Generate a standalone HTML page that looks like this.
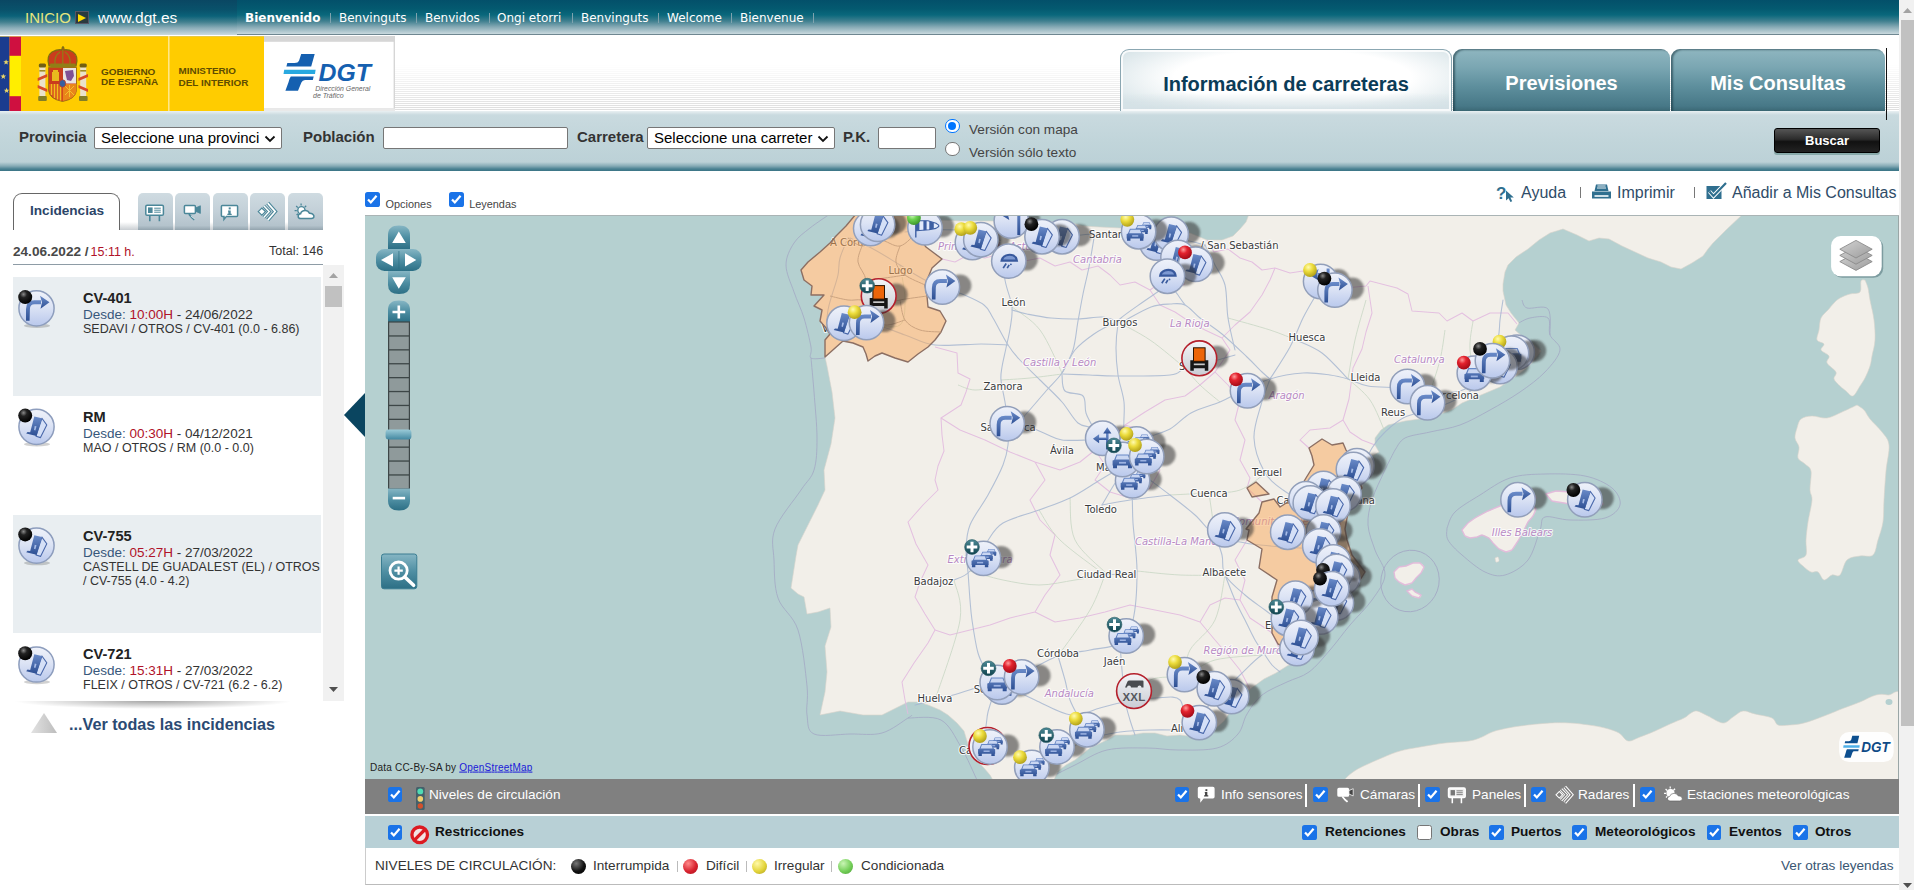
<!DOCTYPE html>
<html lang="es"><head><meta charset="utf-8"><title>DGT - Información de carreteras</title>
<style>
html,body{margin:0;padding:0}
body{width:1914px;height:890px;overflow:hidden;background:#fff;position:relative;font-family:"Liberation Sans",sans-serif;color:#333;font-size:13.6px}
.abs,#page *{box-sizing:border-box}
#page div,#page span,#page a,#page svg,#page i,#page b{position:absolute}
#page span.t{white-space:nowrap;line-height:1}
/* top bar */
#top{left:0;top:0;width:1899px;height:35px;background:linear-gradient(#03506a 0,#045a70 9px,#0a687c 15px,#3f7f8f 21px,#86aab5 27px,#c9d9de 34px)}
#topl{left:0;top:0;width:237px;height:35px;background:linear-gradient(#0a4763 0,#09526b 10px,#0b6279 16px,#41808f 22px,#8caeb9 28px,#cbdade 35px)}
#topline{left:237px;top:34px;width:1662px;height:1px;background:#6f8791}
.lang{top:12px;font-family:"DejaVu Sans",sans-serif;font-size:12px;color:#fff}
.sep{top:13px;width:1px;height:10px;background:#7fa3ae}
/* logo */
#logo{left:0;top:36px;width:394px;height:75px;background:#fc0}
/* stripes */
#stripes{left:394px;top:36px;width:1505px;height:75px;background:linear-gradient(#fff 0,#fff 38%,rgba(255,255,255,.55) 65%,rgba(255,255,255,0) 100%),repeating-linear-gradient(#fff 0,#fff 1px,#dedede 1px,#dedede 2px);}
#stripes2{display:none}
/* tabs */
.tab{top:48.5px;height:62.5px;border-radius:9px 9px 0 0;font-weight:bold;font-size:20px;text-align:center;line-height:68px}
.tab.on{left:1120px;width:332px;border:1px solid #8ba7b2;border-bottom:0;color:#0b3c58;background:linear-gradient(rgba(255,255,255,0) 70%,#d3e0e5 100%),radial-gradient(ellipse 60% 75% at 52% 45%,#fff 60%,#d9e5e9 100%);box-shadow:inset 0 0 0 2px rgba(255,255,255,.8)}
.tab.off{color:#fff;background:linear-gradient(#8fb6c0 0,#7aa6b2 30%,#5e8f9d 60%,#477887 92%,#3b6875 100%);box-shadow:inset 2px 1px 2px rgba(20,50,60,.55)}
/* search bar */
#sbar{left:0;top:111px;width:1899px;height:60px;background:linear-gradient(#e9f0f2 0,#c9dadf 4px,#c1d5da 30px,#bcd1d7 51px,#86abb6 55px,#4a8192 58px,#3b7485 60px)}
.lbl{font-weight:bold;font-size:15px;color:#333}
.inp{background:#fff;border:1px solid #767676;border-radius:2px}

.sel svg{right:5px;top:7px}
.cb{width:14.6px;height:14.6px;border-radius:2.6px;background:#1a73e8}
.cb.off{background:#fff;border:1.2px solid #767676}
.radio{width:14.4px;height:14.4px;border-radius:50%;background:#fff;border:1px solid #767676}
.radio.on{border:1px solid #0075ff}
.radio.on:after{content:"";position:absolute;left:2.2px;top:2.2px;width:8px;height:8px;border-radius:50%;background:#0075ff}
.tb{font-size:16px;color:#2f4c68;top:184.8px}
.vsep{width:1px;background:#777}
/* left panel */
#inc{left:13px;top:193px;width:107px;height:37px;border:1px solid #666;border-bottom:0;border-radius:9px 9px 0 0;background:#fff}
.itab{top:193px;width:35px;height:37px;border-radius:5px 5px 0 0;background:linear-gradient(#cfdbe1 0,#c3d0d8 50%,#b4c3cc 88%,#93a4ae 100%)}
.row{left:13px;width:308px;height:119px}
.row.alt{background:#e9eef1}
.row b{left:70px;top:14px;font-size:14.6px;color:#222;white-space:nowrap;line-height:1}
.row .d{left:70px;top:30.8px;font-size:13.5px;color:#333;white-space:nowrap;line-height:1}
.row .d em{font-style:normal;color:#37577b}.row .d u{text-decoration:none;color:#b01229}
.row .p{left:70px;top:45px;width:240px;font-size:12.5px;color:#333;line-height:14.4px}
/* bars */
#gbar{left:365px;top:779px;width:1534px;height:34.5px;background:#808080}
#bbar{left:365px;top:815.5px;width:1534px;height:32.5px;background:#b8d0d6}
#leg{left:365px;top:848px;width:1534px;height:37px;background:#fff;border-left:1px solid #ccc;border-bottom:1px solid #bbb}
.gt{font-size:13.6px;color:#fff;top:787.7px}
.bt{font-size:13.6px;font-weight:bold;color:#111;top:825px}
.lt{font-size:13.6px;color:#333;top:859px}
.ball{width:15px;height:15px;border-radius:50%;top:859px}
.wsep{width:2px;height:23px;top:784px;background:#fff}
</style></head>
<body><div id="page">
<div id="top"></div><div id="topl"></div><div id="topline"></div>
<span class="t" style="left:25px;top:10px;font-size:15px;color:#e6e57e">INICIO</span>
<i style="left:75px;top:11px;width:14px;height:13px;background:#2a3a3f;border:1px solid #556"></i>
<svg style="left:78px;top:14px" width="8" height="8"><path d="M0 0L8 4L0 8Z" fill="#fd0"/></svg>
<span class="t" style="left:98px;top:10px;font-size:15.5px;color:#fff">www.dgt.es</span>
<span class="t lang" style="left:245px;font-weight:bold">Bienvenido</span><i class="sep" style="left:330px"></i>
<span class="t lang" style="left:339px">Benvinguts</span><i class="sep" style="left:416px"></i>
<span class="t lang" style="left:425px">Benvidos</span><i class="sep" style="left:489px"></i>
<span class="t lang" style="left:497px">Ongi etorri</span><i class="sep" style="left:572px"></i>
<span class="t lang" style="left:581px">Benvinguts</span><i class="sep" style="left:658px"></i>
<span class="t lang" style="left:667px">Welcome</span><i class="sep" style="left:731px"></i>
<span class="t lang" style="left:740px">Bienvenue</span><i class="sep" style="left:813px"></i>

<div id="stripes"></div><div id="stripes2"></div>
<!--LOGO--><svg style="left:0;top:36px" width="400" height="76" viewBox="0 36 400 76">
<rect x="0" y="36" width="264" height="75.5" fill="#ffcc00"/>
<rect x="0" y="36" width="9.6" height="75.5" fill="#1b3c8f"/>
<path transform="translate(6.1 62.2)" d="M0 -2.8L0.8 -0.9L2.8 -0.9L1.2 0.4L1.8 2.4L0 1.2L-1.8 2.4L-1.2 0.4L-2.8 -0.9L-0.8 -0.9Z" fill="#e8d46a"/>
<path transform="translate(3.3 76.5)" d="M0 -2.8L0.8 -0.9L2.8 -0.9L1.2 0.4L1.8 2.4L0 1.2L-1.8 2.4L-1.2 0.4L-2.8 -0.9L-0.8 -0.9Z" fill="#e8d46a"/>
<path transform="translate(6.6 90.6)" d="M0 -2.8L0.8 -0.9L2.8 -0.9L1.2 0.4L1.8 2.4L0 1.2L-1.8 2.4L-1.2 0.4L-2.8 -0.9L-0.8 -0.9Z" fill="#e8d46a"/>
<rect x="9.6" y="36" width="11.4" height="75.5" fill="#cf1040"/><rect x="9.6" y="55.8" width="11.4" height="40.4" fill="#ffee00"/>
<rect x="0" y="36" width="264" height="1" fill="#e0c860" opacity=".7"/>
<g opacity=".95"><rect x="39.400000000000006" y="66" width="6" height="30" fill="#e9e4d6"/><rect x="38.2" y="96" width="8.6" height="5" rx="1" fill="#7d7a2a"/><rect x="38.800000000000004" y="63.5" width="7.2" height="4" rx="1.5" fill="#6b5a14"/><path d="M37.7 78L47.2 74L47.2 77L37.7 81Z M37.7 88L47.2 92L47.2 89L37.7 85Z" fill="#d4442c"/><rect x="39.400000000000006" y="70" width="6" height="1.6" fill="#9b8a2a"/><rect x="80.2" y="66" width="6" height="30" fill="#e9e4d6"/><rect x="79" y="96" width="8.6" height="5" rx="1" fill="#7d7a2a"/><rect x="79.6" y="63.5" width="7.2" height="4" rx="1.5" fill="#6b5a14"/><path d="M78.5 78L88 74L88 77L78.5 81Z M78.5 88L88 92L88 89L78.5 85Z" fill="#d4442c"/><rect x="80.2" y="70" width="6" height="1.6" fill="#9b8a2a"/><path d="M49 66Q46 56 52 52Q58 49 62 50Q62 47.5 62.6 47L63.4 47Q64 47.5 64 50Q68 49 73 52Q79 56 76 66Q63 63 49 66Z" fill="#c8351f" stroke="#7a6a12" stroke-width="1.3"/><path d="M55 64Q54 56 60 52 M70 64Q71 56 65 52 M62.8 50L62.8 64" stroke="#8c7a18" stroke-width="1.2" fill="none"/><rect x="50" y="63.6" width="25.5" height="3.4" rx="1" fill="#8c7a18"/><path d="M48.5 67.5L76.5 67.5L76.5 90Q76 99 62.5 101.5Q49 99 48.5 90Z" fill="#c8351f" stroke="#8c6a18" stroke-width=".8"/><rect x="63" y="68" width="13" height="15.5" fill="#e9e6ee"/><path d="M65 71L73 70L74 76L71 81L67 80L66 76Z" fill="#7a4a9c"/><path d="M49 84L62.5 84L62.5 101Q50 98.5 49 90Z" fill="#d9541f"/><path d="M51.5 84L51.5 95M54.5 84L54.5 98M57.5 84L57.5 99.5M60.5 84L60.5 100.5" stroke="#f0c020" stroke-width="1.3"/><path d="M63 84L76.5 84L76.5 90Q76 98.5 63 101Z" fill="#e8821c"/><path d="M65 86L74 95M74 86L65 95M69.5 85L69.5 97" stroke="#f2c030" stroke-width="1"/><path d="M53 70L58 70L58 72L59 72L59 81L52 81L52 72L53 72Z" fill="#e8b820"/><ellipse cx="62.5" cy="83.5" rx="3.2" ry="3.8" fill="#2d5aa8" stroke="#c8351f" stroke-width=".8"/></g>
<text x="101" y="74.7" font-size="9.3" textLength="54.4" font-family="Liberation Sans,sans-serif" font-weight="bold" fill="#5f4d00" lengthAdjust="spacingAndGlyphs">GOBIERNO</text>
<text x="101" y="85.2" font-size="9.3" textLength="57.2" font-family="Liberation Sans,sans-serif" font-weight="bold" fill="#5f4d00" lengthAdjust="spacingAndGlyphs">DE ESPAÑA</text>
<rect x="168.3" y="36" width="1.1" height="75.5" fill="#fff3c0"/>
<text x="178.6" y="74.3" font-size="9.3" textLength="57.4" font-family="Liberation Sans,sans-serif" font-weight="bold" fill="#5f4d00" lengthAdjust="spacingAndGlyphs">MINISTERIO</text>
<text x="178.6" y="86.3" font-size="9.3" textLength="69.8" font-family="Liberation Sans,sans-serif" font-weight="bold" fill="#5f4d00" lengthAdjust="spacingAndGlyphs">DEL INTERIOR</text>
<rect x="264" y="36" width="131" height="75.5" fill="#d6d6d6"/><rect x="264" y="41.8" width="129.6" height="66.6" fill="#fff"/>
<rect x="264" y="108.4" width="131" height="3.1" fill="#e9e9e9"/>
<g transform="translate(283.5 54) scale(1 1)"><path d="M17.7 0L31.2 0L27.7 12.6L2.9 12.6L3.8 9.1L11 9.1Q14.6 9.1 15.6 6.6Z" fill="#1560b0"/><path d="M0.7 15.7L32.1 15.7L31.5 20.1L0 20.1Z" fill="#29a9e0"/><path d="M7.3 22.6L30.2 22.6L29.3 26.1L21.5 26.1Q18.9 26.1 17.9 28.6L14.5 36.8L1.9 36.8L5.1 28Q6 24.4 7.3 22.6Z" fill="#1560b0"/></g>
<text x="318.6" y="80.7" font-family="Liberation Sans,sans-serif" font-weight="bold" font-style="italic" font-size="24.5" fill="#1560b0" textLength="52.4" lengthAdjust="spacingAndGlyphs">DGT</text>
<text x="315.3" y="90.8" font-family="Liberation Sans,sans-serif" font-style="italic" font-size="7.6" fill="#666" textLength="55" lengthAdjust="spacingAndGlyphs">Dirección General</text>
<text x="313" y="97.9" font-family="Liberation Sans,sans-serif" font-style="italic" font-size="7.6" fill="#666" textLength="30.6" lengthAdjust="spacingAndGlyphs">de Tráfico</text>
</svg><!--/LOGO-->

<div class="tab on">Información de carreteras</div>
<div class="tab off" style="left:1453px;width:217px">Previsiones</div>
<div class="tab off" style="left:1671px;width:214px">Mis Consultas</div>
<i style="left:1886px;top:48px;width:1px;height:72px;background:#111;z-index:5"></i>

<div id="sbar"></div>
<span class="t lbl" style="left:19px;top:129px">Provincia</span>
<div class="inp sel" style="left:94px;top:127px;width:188px;height:22px"><svg width="12" height="8" viewBox="0 0 12 8"><path d="M1.5 1.5L6 6L10.5 1.5" fill="none" stroke="#111" stroke-width="1.8"/></svg></div>
<span class="t" style="left:101px;top:130px;font-size:15px;color:#000">Seleccione una provinci</span>

<span class="t lbl" style="left:303px;top:129px">Población</span>
<div class="inp" style="left:383px;top:127px;width:185px;height:22px"></div>
<span class="t lbl" style="left:577px;top:129px">Carretera</span>
<div class="inp sel" style="left:647px;top:127px;width:188px;height:22px"><svg width="12" height="8" viewBox="0 0 12 8"><path d="M1.5 1.5L6 6L10.5 1.5" fill="none" stroke="#111" stroke-width="1.8"/></svg></div>
<span class="t" style="left:654px;top:130px;font-size:15px;color:#000">Seleccione una carreter</span>
<span class="t lbl" style="left:843px;top:129px">P.K.</span>
<div class="inp" style="left:878px;top:127px;width:58px;height:22px"></div>
<i class="radio on" style="left:945.3px;top:118.8px"></i>
<i class="radio" style="left:945.3px;top:141.8px"></i>
<span class="t" style="left:969px;top:123px;font-size:13.6px;color:#444">Versión con mapa</span>
<span class="t" style="left:969px;top:146px;font-size:13.6px;color:#444">Versión sólo texto</span>
<div style="left:1774px;top:128px;width:106px;height:25px;border-radius:3px;background:linear-gradient(#555 0,#2b2b2b 45%,#111 55%,#222 100%);border:1px solid #000;box-shadow:0 2px 0 #8aa"></div>
<span class="t" style="left:1805px;top:134px;font-size:13px;font-weight:bold;color:#fff">Buscar</span>

<span class="t tb" style="left:1521px">Ayuda</span><i class="vsep" style="left:1580px;top:187px;height:11px"></i>
<span class="t tb" style="left:1617px">Imprimir</span><i class="vsep" style="left:1694px;top:187px;height:11px"></i>
<span class="t tb" style="left:1732px">Añadir a Mis Consultas</span>

<div id="tabshadow" style="left:120px;top:222px;width:203px;height:8px;background:linear-gradient(rgba(255,255,255,0),#c9ced2)"></div>
<div id="inc"></div>
<span class="t" style="left:30px;top:204px;font-size:13.6px;font-weight:bold;color:#2b4568">Incidencias</span>
<div class="itab" style="left:138px"></div><div class="itab" style="left:175px"></div><div class="itab" style="left:213px"></div><div class="itab" style="left:250px"></div><div class="itab" style="left:288px"></div>
<span class="t" style="left:13px;top:245px;font-size:13.6px;font-weight:bold;color:#484848">24.06.2022 /</span>
<span class="t" style="left:90.5px;top:245.5px;font-size:12.5px;color:#b01229">15:11 h.</span>
<span class="t" style="left:269px;top:245px;font-size:12.5px;color:#333">Total: 146</span>
<i style="left:13px;top:264px;width:310px;height:1px;background:#8e9ca6"></i>
<div style="left:323px;top:265px;width:21px;height:436px;background:#f1f1f1"></div>
<i style="left:325px;top:286px;width:17px;height:21px;background:#c1c1c1"></i>
<svg style="left:329px;top:273px" width="9" height="5"><path d="M0 5L4.5 0L9 5Z" fill="#a3a3a3"/></svg>
<svg style="left:329px;top:687px" width="9" height="5"><path d="M0 0L4.5 5L9 0Z" fill="#505050"/></svg>
<div class="row alt" style="top:277px"><b>CV-401</b><span class="d"><em>Desde:</em> <u>10:00H</u> - 24/06/2022</span><span class="p">SEDAVI / OTROS / CV-401 (0.0 - 6.86)</span></div>
<div class="row" style="top:396px"><b>RM</b><span class="d"><em>Desde:</em> <u>00:30H</u> - 04/12/2021</span><span class="p">MAO / OTROS / RM (0.0 - 0.0)</span></div>
<div class="row alt" style="top:515px;height:118px"><b>CV-755</b><span class="d"><em>Desde:</em> <u>05:27H</u> - 27/03/2022</span><span class="p">CASTELL DE GUADALEST (EL) / OTROS / CV-755 (4.0 - 4.2)</span></div>
<div class="row" style="top:633px;height:68px;overflow:hidden"><b>CV-721</b><span class="d"><em>Desde:</em> <u>15:31H</u> - 27/03/2022</span><span class="p">FLEIX / OTROS / CV-721 (6.2 - 6.2)</span></div>
<div style="left:13px;top:701px;width:280px;height:8px;background:radial-gradient(ellipse at 50% 0,rgba(0,0,0,.35),rgba(0,0,0,0) 70%)"></div>
<svg style="left:31px;top:713px" width="27" height="21"><defs><linearGradient id="tg" x1="0" x2="1"><stop offset="0" stop-color="#e2e2e2"/><stop offset="1" stop-color="#bdbdbd"/></linearGradient></defs><path d="M13 0L26 20L0 20Z" fill="url(#tg)"/></svg>
<span class="t" style="left:69px;top:716px;font-size:16.2px;font-weight:bold;color:#2b4a73">...Ver todas las incidencias</span>
<svg style="left:344px;top:393px" width="21" height="44"><path d="M21 0L0 22L21 44Z" fill="#0a4560"/></svg>

<i class="cb" style="left:365.2px;top:192.1px"><svg width="14.6" height="14.6" viewBox="0 0 13 13"><path d="M2.7 6.6L5.2 9.3L10.3 3.4" fill="none" stroke="#fff" stroke-width="2"/></svg></i><span class="t" style="left:385.6px;top:198.6px;font-size:10.9px;color:#444">Opciones</span>
<i class="cb" style="left:449.1px;top:192.1px"><svg width="14.6" height="14.6" viewBox="0 0 13 13"><path d="M2.7 6.6L5.2 9.3L10.3 3.4" fill="none" stroke="#fff" stroke-width="2"/></svg></i><span class="t" style="left:469.2px;top:198.6px;font-size:10.9px;color:#444">Leyendas</span>

<div id="map" style="left:365px;top:216px;width:1534px;height:563px;background:#b5d0d0;overflow:hidden"><!--MAP--><svg style="left:0;top:0" width="1534" height="563" viewBox="365 216 1534 563">
<defs>
<linearGradient id="mg" x1="0" y1="0" x2="0" y2="1"><stop offset="0" stop-color="#eff2fa"/><stop offset=".45" stop-color="#dde4f5"/><stop offset="1" stop-color="#b9c8ec"/></linearGradient>
<linearGradient id="ig" x1="0" y1="0" x2="0" y2="1"><stop offset="0" stop-color="#6a8bc9"/><stop offset="1" stop-color="#2d4f93"/></linearGradient>
<linearGradient id="xg" x1="0" y1="0" x2="0" y2="1"><stop offset="0" stop-color="#f4f5f7"/><stop offset="1" stop-color="#c9ccd4"/></linearGradient>
<radialGradient id="bk" cx=".38" cy=".3" r=".7"><stop offset="0" stop-color="#8a8a8a"/><stop offset=".35" stop-color="#222"/><stop offset="1" stop-color="#000"/></radialGradient>
<radialGradient id="br" cx=".38" cy=".3" r=".7"><stop offset="0" stop-color="#ff9c9c"/><stop offset=".4" stop-color="#e3222e"/><stop offset="1" stop-color="#a30c18"/></radialGradient>
<radialGradient id="by" cx=".38" cy=".3" r=".7"><stop offset="0" stop-color="#fffbb0"/><stop offset=".45" stop-color="#ecdc3c"/><stop offset="1" stop-color="#b3a21a"/></radialGradient>
<radialGradient id="bg" cx=".38" cy=".3" r=".7"><stop offset="0" stop-color="#d4f9c2"/><stop offset=".45" stop-color="#6fd453"/><stop offset="1" stop-color="#3f9a2c"/></radialGradient>
<linearGradient id="pg" x1="0" y1="0" x2="0" y2="1"><stop offset="0" stop-color="#4d8a96"/><stop offset="1" stop-color="#0e424e"/></linearGradient>
<filter id="bl" x="-40%" y="-40%" width="180%" height="180%"><feGaussianBlur stdDeviation="1.3"/></filter>
<g id="mk"><ellipse cx="17.5" cy="-1.5" rx="11.5" ry="11" fill="#333" opacity=".55" filter="url(#bl)"/><circle r="17.2" fill="url(#mg)" stroke="#929fba" stroke-width="1.5"/></g>
<g id="rk"><ellipse cx="17.5" cy="-1.5" rx="11.5" ry="11" fill="#333" opacity=".55" filter="url(#bl)"/><circle r="17.4" fill="url(#xg)" stroke="#b5202c" stroke-width="1.6"/></g>
<g id="turnR" fill="url(#ig)"><path d="M-10.5 12.5L-10.5 1Q-10.5 -8 -2 -8L4.5 -8L4.5 -4L-2 -4Q-6.6 -4 -6.6 1L-6.9 12.5Z"/><path d="M3.5 -12.5L13 -6L4 0.5L5.5 -6Z"/></g>
<g id="turnL" fill="url(#ig)"><path d="M6 14L6 -13L9 -13L9 14Z"/><path d="M7 -5L-3 -5L-3 -8.5L7 -8.5Z"/><path d="M-2 -12.5L-11.5 -6.8L-2 -1L-3.5 -6.8Z"/></g>
<g id="works"><path d="M5.4 -8.5L10.3 -1.8L4 10.8L-0.5 9.4Z" fill="#d5e0f7" stroke="#4867aa" stroke-width="1.1" stroke-linejoin="round"/><path d="M-2.2 -10.3L5.4 -8.5L0 9.2L-10.3 6.7L-9 5.1L-6.3 5.4Z" fill="url(#ig)"/><path d="M-1.8 -0.9L0 -0.45L-1.1 3.6L-2.5 3.1Z" fill="#a8bde8"/></g>
<g id="car1"><path d="M-5.6 -6L5.6 -6L7.6 -1L9 -0.4L9 4.2L8.6 4.2L8.6 6.6L5 6.6L5 4.2L-5 4.2L-5 6.6L-8.6 6.6L-8.6 4.2L-9 4.2L-9 -0.4L-7.6 -1Z" fill="url(#ig)"/><path d="M-4.9 -5L4.9 -5L6.4 -1.3L-6.4 -1.3Z" fill="#c9d6f2"/><rect x="-3.2" y="0.8" width="6.4" height="1.6" fill="#9db3e2"/></g>
<g id="cars"><g transform="translate(7.9 -6.2) scale(.55)"><use href="#car1"/></g><g transform="translate(2.9 -2.4) scale(.72)"><use href="#car1"/></g><g transform="translate(-3.4 2.7) scale(.95)"><use href="#car1"/></g></g>
<g id="car"><g transform="translate(0 1.5) scale(1.1)"><use href="#car1"/></g></g>
<g id="snow"><path d="M-8.5 0.6Q-8.3 -4.6 -3 -6.7Q1 -8.1 5 -6.7Q9.2 -4.6 9.4 0.6Z" fill="#38599d"/><path d="M-5.6 -1.6Q-4.8 -3.9 -2.2 -4.8Q1 -5.7 3.9 -4.8Q6.2 -3.9 6.7 -1.6Z" fill="#7d99d2"/><path d="M-5.6 7L-2.6 2.4M-1.6 7L0.4 3.8" stroke="#3a5c9f" stroke-width="1.7" fill="none"/><circle cx="2.1" cy="3.2" r=".9" fill="#3a5c9f"/></g>
<g id="wind"><path d="M-8.5 -7L3 -7L11 -4.5L13.7 -2.7L13.7 -1.3L11 0.6L4 2L-8.5 2.9Z" fill="#e3ebfb" stroke="#3d5fa3" stroke-width="1.1" stroke-linejoin="round"/><path d="M-8.5 -7L-5.6 -7L-5.6 2.7L-8.5 2.9Z M-1.6 -7L1.6 -7L1.6 2.3L-1.6 2.5Z M4.3 -6.6L8.8 -5.2L8.8 1L4.3 2Z" fill="#3d5fa3"/><path d="M-9.9 -4.3L-8.5 -7L-8.5 9.7L-9.9 9.7Z" fill="#3d5fa3"/></g>
<g id="cross" fill="url(#ig)" transform="translate(0.5 0.5) scale(.82)"><path d="M3.5 13L3.5 -8L6.5 -8L6.5 13Z"/><path d="M5 -14L10 -6.5L0 -6.5Z"/><path d="M5 -1.5L-6 -1.5L-6 1.5L5 1.5Z"/><path d="M-12.5 0L-5 -5.5L-5 5.5Z"/></g>
<g id="truck"><path d="M-9 2L9 2L9 12.5L5.5 12.5L5.5 10L-5.5 10L-5.5 12.5L-9 12.5Z" fill="#161616"/><rect x="-5.8" y="-10.5" width="11.6" height="13.5" fill="#ec650a" stroke="#2a1200" stroke-width="1"/><rect x="-5.5" y="5.2" width="11" height="1.7" fill="#c8c8c8"/></g>
<g id="xxl"><path d="M-9 -3.5L-6.5 -9.5Q-6 -10.5 -4.5 -10.5L8.5 -10.5Q9.5 -10.5 9.5 -9.5L9.5 -3.5L7.5 -3.5A2 2 0 0 0 3.5 -3.5L-3 -3.5A2 2 0 0 0 -7 -3.5Z" fill="#4a4c50"/></g>
<g id="plus"><circle r="7.4" fill="url(#pg)" stroke="#2a5a62" stroke-width=".6"/><path d="M-1.5 -5.3h3v3.8h3.8v3h-3.8v3.8h-3v-3.8h-3.8v-3h3.8z" fill="#fff"/></g>
</defs>
<rect x="365" y="216" width="1534" height="563" fill="#b5d0d0"/>
<g fill="none" stroke="#9d9bc0" stroke-width=".8" opacity=".75">
<path d="M830 214C826.7 216.3 816.0 223.2 810 228C804.0 232.8 798.0 236.8 794 243C790.0 249.2 786.0 256.8 786 265C786.0 273.2 791.0 283.2 794 292C797.0 300.8 801.2 308.8 804 318C806.8 327.2 809.8 340.3 811 347C812.2 353.7 808.7 356.2 811 358C813.3 359.8 822.7 358.0 825 358"/>
<path d="M811 358C811.5 363.7 813.0 378.7 814 392C815.0 405.3 817.0 425.0 817 438C817.0 451.0 816.7 461.3 814 470C811.3 478.7 807.5 480.2 801 490C794.5 499.8 779.5 517.3 775 529C770.5 540.7 773.5 548.5 774 560C774.5 571.5 774.0 586.3 778 598C782.0 609.7 793.2 615.3 798 630C802.8 644.7 805.5 671.8 807 686C808.5 700.2 805.8 707.0 807 715C808.2 723.0 806.8 730.8 814 734C821.2 737.2 838.7 734.2 850 734C861.3 733.8 872.3 735.7 882 733C891.7 730.3 903.0 721.0 908 718C913.0 715.0 911.3 715.5 912 715"/>
<path d="M908 718C913.5 718.3 932.2 715.2 941 720C949.8 724.8 955.0 737.0 961 747C967.0 757.0 974.3 774.5 977 780"/>
<path d="M1045 780C1050.0 777.5 1064.7 770.0 1075 765C1085.3 760.0 1095.0 752.8 1107 750C1119.0 747.2 1135.2 748.0 1147 748C1158.8 748.0 1166.3 750.0 1178 750C1189.7 750.0 1207.0 750.7 1217 748C1227.0 745.3 1233.0 739.7 1238 734C1243.0 728.3 1243.0 720.5 1247 714C1251.0 707.5 1255.3 700.3 1262 695C1268.7 689.7 1279.2 685.8 1287 682C1294.8 678.2 1301.8 677.3 1309 672C1316.2 666.7 1323.2 657.8 1330 650C1336.8 642.2 1343.0 633.3 1350 625C1357.0 616.7 1366.2 608.3 1372 600C1377.8 591.7 1384.5 583.3 1385 575C1385.5 566.7 1377.8 558.3 1375 550C1372.2 541.7 1368.5 533.3 1368 525C1367.5 516.7 1369.2 509.2 1372 500C1374.8 490.8 1381.2 478.3 1385 470C1388.8 461.7 1393.3 453.3 1395 450"/>
<path d="M1395 450C1396.7 448.0 1399.2 441.0 1405 438C1410.8 435.0 1420.8 434.2 1430 432C1439.2 429.8 1450.0 428.7 1460 425C1470.0 421.3 1480.0 415.5 1490 410C1500.0 404.5 1510.8 398.3 1520 392C1529.2 385.7 1538.3 379.0 1545 372C1551.7 365.0 1559.2 356.2 1560 350C1560.8 343.8 1552.0 340.3 1550 335C1548.0 329.7 1551.3 320.8 1548 318C1544.7 315.2 1535.2 317.0 1530 318C1524.8 319.0 1519.2 323.0 1517 324"/>
<path d="M1522 300C1522.8 301.3 1522.7 306.5 1527 308C1531.3 309.5 1544.2 304.5 1548 309C1551.8 313.5 1549.7 330.7 1550 335"/>
<path d="M1447 528C1448.3 525.3 1449.5 517.5 1455 512C1460.5 506.5 1470.8 500.7 1480 495C1489.2 489.3 1499.2 481.5 1510 478C1520.8 474.5 1532.5 474.3 1545 474C1557.5 473.7 1573.8 473.7 1585 476C1596.2 478.3 1606.2 483.2 1612 488C1617.8 492.8 1621.2 500.0 1620 505C1618.8 510.0 1613.3 515.5 1605 518C1596.7 520.5 1580.0 520.2 1570 520C1560.0 519.8 1550.0 515.3 1545 517C1540.0 518.7 1542.8 522.8 1540 530C1537.2 537.2 1533.8 552.5 1528 560C1522.2 567.5 1512.2 573.0 1505 575C1497.8 577.0 1492.2 575.3 1485 572C1477.8 568.7 1468.2 560.3 1462 555C1455.8 549.7 1450.5 544.5 1448 540C1445.5 535.5 1447.2 530.0 1447 528"/>
<ellipse cx="1410" cy="581" rx="29" ry="31" transform="rotate(20 1410 581)"/>
</g>
<g fill="#f2efe9" stroke="#d9d4cb" stroke-width=".6">
<polygon points="856,214 846,226 836,236 830,243 820,252 808,262 801,270 804,280 812,286 811,295 824,295 814,306 822,310 820,321 826,328 830,334 825,340 825,357 827,366 832,392 835,418 831,444 824,470 825,490 818,505 811,519 798,545 796,556 791,588 798,594 804,597 807,614 818,612 830,608 831,627 825,646 827,672 825,692 820,715 830,713 840,711 863,715 882,715 896,708 908,702 918,702 928,705 940,710 948,715 957,723 964,731 967,741 970,751 976,760 984,768 990,775 994,782 1053,782 1058,771 1066,765 1075,760 1090,748 1107,740 1115,735 1131,735 1143,733 1155,733 1167,736 1180,735 1195,737 1208,734 1216,728 1224,721 1230,712 1238,699 1250,689 1264,679 1276,673 1287,666 1300,660 1310,653 1313,643 1320,632 1336,613 1346,600 1355,588 1365,572 1358,563 1352,555 1347,540 1345,529 1347,518 1349,509 1355,496 1362,488 1368,464 1372,456 1379,452 1375,445 1375,438 1381,430 1388,425 1405,421 1427,418 1443,413 1453,409 1462,403 1481,395 1500,387 1519,374 1531,364 1541,351 1534,345 1524,338 1515,330 1519,323 1511,313 1506,305 1503,291 1503,284 1505,272 1508,265 1516,257 1528,249 1539,240 1550,233 1563,229 1577,235 1589,241 1599,238 1609,239 1622,246 1635,252 1648,258 1661,262 1671,267 1681,269 1692,263 1703,256 1708,249 1713,243 1726,230 1743,214 1249,214 1246,222 1240,229 1233,236 1222,240 1207,240 1190,233 1170,230 1140,229 1120,228 1100,227 1082,226 1072,223 1060,222 1030,221 1000,221 960,221 935,220 920,217 908,214"/>
<path d="M1343 782C1343.7 781.2 1344.8 779.0 1347 777C1349.2 775.0 1352.5 772.2 1356 770C1359.5 767.8 1363.3 766.2 1368 764C1372.7 761.8 1378.7 759.2 1384 757C1389.3 754.8 1394.0 752.7 1400 751C1406.0 749.3 1412.5 748.3 1420 747C1427.5 745.7 1436.8 744.0 1445 743C1453.2 742.0 1462.8 742.0 1469 741C1475.2 740.0 1477.7 738.7 1482 737C1486.3 735.3 1488.7 732.8 1495 731C1501.3 729.2 1510.8 727.3 1520 726C1529.2 724.7 1541.7 723.5 1550 723C1558.3 722.5 1563.5 722.7 1570 723C1576.5 723.3 1583.2 724.2 1589 725C1594.8 725.8 1600.0 726.7 1605 728C1610.0 729.3 1615.2 730.8 1619 733C1622.8 735.2 1624.5 740.3 1628 741C1631.5 741.7 1635.5 738.7 1640 737C1644.5 735.3 1650.0 733.2 1655 731C1660.0 728.8 1665.2 726.2 1670 724C1674.8 721.8 1680.5 719.8 1684 718C1687.5 716.2 1688.8 714.2 1691 713C1693.2 711.8 1694.2 710.5 1697 711C1699.8 711.5 1703.7 714.0 1708 716C1712.3 718.0 1718.8 722.8 1723 723C1727.2 723.2 1729.7 719.0 1733 717C1736.3 715.0 1739.3 711.5 1743 711C1746.7 710.5 1750.2 712.8 1755 714C1759.8 715.2 1768.2 716.2 1772 718C1775.8 719.8 1775.0 723.8 1778 725C1781.0 726.2 1785.7 725.3 1790 725C1794.3 724.7 1798.3 724.5 1804 723C1809.7 721.5 1817.3 718.5 1824 716C1830.7 713.5 1838.0 710.3 1844 708C1850.0 705.7 1854.7 704.2 1860 702C1865.3 699.8 1871.3 696.2 1876 695C1880.7 693.8 1883.7 694.3 1888 695C1892.3 695.7 1899.7 684.5 1902 699C1904.3 713.5 1995.2 768.2 1902 782C1808.8 795.8 1436.2 782.0 1343 782Z"/>
<path d="M1865 280C1865.5 281.3 1867.2 284.7 1868 288C1868.8 291.3 1869.0 294.7 1870 300C1871.0 305.3 1873.2 313.3 1874 320C1874.8 326.7 1875.3 334.0 1875 340C1874.7 346.0 1872.8 351.7 1872 356C1871.2 360.3 1871.2 362.3 1870 366C1868.8 369.7 1866.7 374.7 1865 378C1863.3 381.3 1862.0 383.0 1860 386C1858.0 389.0 1855.3 395.2 1853 396C1850.7 396.8 1848.2 392.7 1846 391C1843.8 389.3 1842.0 388.0 1840 386C1838.0 384.0 1834.7 381.3 1834 379C1833.3 376.7 1837.2 374.7 1836 372C1834.8 369.3 1828.2 365.7 1827 363C1825.8 360.3 1830.0 358.2 1829 356C1828.0 353.8 1821.8 352.0 1821 350C1820.2 348.0 1824.7 345.7 1824 344C1823.3 342.3 1817.8 342.3 1817 340C1816.2 337.7 1818.3 333.7 1819 330C1819.7 326.3 1819.5 321.3 1821 318C1822.5 314.7 1825.8 312.5 1828 310C1830.2 307.5 1832.0 305.0 1834 303C1836.0 301.0 1837.3 299.5 1840 298C1842.7 296.5 1846.7 295.0 1850 294C1853.3 293.0 1858.2 294.2 1860 292C1861.8 289.8 1860.2 283.0 1861 281C1861.8 279.0 1864.3 280.2 1865 280Z"/>
<path d="M1857 405C1854.5 406.2 1847.0 409.8 1842 412C1837.0 414.2 1832.0 417.3 1827 418C1822.0 418.7 1816.3 415.8 1812 416C1807.7 416.2 1803.5 417.0 1801 419C1798.5 421.0 1798.0 424.8 1797 428C1796.0 431.2 1794.7 434.8 1795 438C1795.3 441.2 1798.5 443.7 1799 447C1799.5 450.3 1797.0 455.2 1798 458C1799.0 460.8 1802.8 461.8 1805 464C1807.2 466.2 1810.2 466.7 1811 471C1811.8 475.3 1809.8 485.2 1810 490C1810.2 494.8 1812.3 494.7 1812 500C1811.7 505.3 1809.0 515.3 1808 522C1807.0 528.7 1806.3 534.5 1806 540C1805.7 545.5 1807.3 551.7 1806 555C1804.7 558.3 1798.5 558.2 1798 560C1797.5 561.8 1800.8 564.0 1803 566C1805.2 568.0 1808.5 571.0 1811 572C1813.5 573.0 1815.8 570.7 1818 572C1820.2 573.3 1821.7 579.5 1824 580C1826.3 580.5 1829.3 575.8 1832 575C1834.7 574.2 1837.5 577.5 1840 575C1842.5 572.5 1843.7 563.2 1847 560C1850.3 556.8 1855.7 556.8 1860 556C1864.3 555.2 1870.0 557.7 1873 555C1876.0 552.3 1876.3 545.5 1878 540C1879.7 534.5 1882.0 528.7 1883 522C1884.0 515.3 1883.5 508.5 1884 500C1884.5 491.5 1885.2 480.2 1886 471C1886.8 461.8 1889.7 451.5 1889 445C1888.3 438.5 1885.2 436.3 1882 432C1878.8 427.7 1873.0 422.7 1870 419C1867.0 415.3 1866.2 412.3 1864 410C1861.8 407.7 1858.2 405.8 1857 405Z"/>
<path d="M1462 530C1463.0 528.8 1465.8 525.0 1468 523C1470.2 521.0 1471.7 520.0 1475 518C1478.3 516.0 1483.8 513.0 1488 511C1492.2 509.0 1496.0 508.0 1500 506C1504.0 504.0 1508.7 501.0 1512 499C1515.3 497.0 1517.5 495.3 1520 494C1522.5 492.7 1524.8 491.2 1527 491C1529.2 490.8 1531.5 491.8 1533 493C1534.5 494.2 1536.3 496.2 1536 498C1535.7 499.8 1531.0 502.2 1531 504C1531.0 505.8 1535.7 507.0 1536 509C1536.3 511.0 1534.3 513.8 1533 516C1531.7 518.2 1529.7 519.3 1528 522C1526.3 524.7 1524.7 528.8 1523 532C1521.3 535.2 1519.8 538.0 1518 541C1516.2 544.0 1514.0 548.2 1512 550C1510.0 551.8 1508.2 552.2 1506 552C1503.8 551.8 1501.2 550.5 1499 549C1496.8 547.5 1494.7 544.8 1493 543C1491.3 541.2 1490.8 539.3 1489 538C1487.2 536.7 1484.0 535.2 1482 535C1480.0 534.8 1479.0 536.5 1477 537C1475.0 537.5 1472.0 538.2 1470 538C1468.0 537.8 1466.3 537.3 1465 536C1463.7 534.7 1462.5 531.0 1462 530Z"/>
<path d="M1546 494C1547.7 493.5 1552.0 491.3 1556 491C1560.0 490.7 1565.0 491.3 1570 492C1575.0 492.7 1581.3 493.8 1586 495C1590.7 496.2 1595.2 497.5 1598 499C1600.8 500.5 1603.3 502.7 1603 504C1602.7 505.3 1599.8 506.7 1596 507C1592.2 507.3 1585.3 506.7 1580 506C1574.7 505.3 1568.7 503.8 1564 503C1559.3 502.2 1555.0 502.5 1552 501C1549.0 499.5 1547.0 495.2 1546 494Z"/>
<path d="M1394 572C1394.8 571.2 1397.0 568.0 1399 567C1401.0 566.0 1403.7 566.7 1406 566C1408.3 565.3 1410.7 563.5 1413 563C1415.3 562.5 1418.2 562.3 1420 563C1421.8 563.7 1423.8 565.3 1424 567C1424.2 568.7 1422.3 571.2 1421 573C1419.7 574.8 1417.5 576.3 1416 578C1414.5 579.7 1413.8 581.8 1412 583C1410.2 584.2 1407.2 585.2 1405 585C1402.8 584.8 1400.7 583.2 1399 582C1397.3 580.8 1395.8 579.7 1395 578C1394.2 576.3 1394.2 573.0 1394 572Z"/>
<path d="M1407 591C1407.8 590.7 1410.7 588.8 1412 589C1413.3 589.2 1413.5 591.0 1415 592C1416.5 593.0 1420.3 594.0 1421 595C1421.7 596.0 1420.5 597.8 1419 598C1417.5 598.2 1414.0 597.2 1412 596C1410.0 594.8 1407.8 591.8 1407 591Z"/>
<path d="M1495 558C1495.5 557.8 1497.3 556.5 1498 557C1498.7 557.5 1499.3 560.2 1499 561C1498.7 561.8 1496.7 562.5 1496 562C1495.3 561.5 1495.2 558.7 1495 558Z"/>
</g>
<ellipse cx="1889" cy="702" rx="3.5" ry="3" fill="#b5d0d0"/>
<g fill="none" stroke="#e3b4dc" stroke-width="1.4" opacity=".8">
<polygon points="1462,530 1468,523 1475,518 1488,511 1500,506 1512,499 1520,494 1527,491 1533,493 1536,498 1531,504 1536,509 1533,516 1528,522 1523,532 1518,541 1512,550 1506,552 1499,549 1493,543 1489,538 1482,535 1477,537 1470,538 1465,536"/>
<polygon points="1546,494 1556,491 1570,492 1586,495 1598,499 1603,504 1596,507 1580,506 1564,503 1552,501"/>
<polygon points="1394,572 1399,567 1406,566 1413,563 1420,563 1424,567 1421,573 1416,578 1412,583 1405,585 1399,582 1395,578"/>
<polygon points="1407,591 1412,589 1415,592 1421,595 1419,598 1412,596"/>
</g>
<g fill="none" stroke="#e2b9df" stroke-width="1.05" stroke-linejoin="round" opacity=".85">
<polyline points="935,347 957,353 958,373 970,379 966,392 961,405 941,418 942,435 944,451 938,466 935,480 938,490 923,505 908,522 916,544 928,565 920,582 915,597 925,614 935,630 928,643 914,663 902,682 905,700 908,714"/>
<polyline points="1207,240 1214,252 1228,249 1240,258 1252,262 1262,270 1275,268 1290,273 1303,271 1318,280 1345,288 1366,286 1370,281 1397,288 1408,294 1412,311 1439,313 1447,321 1462,313 1473,321 1490,313 1508,313 1517,324"/>
<polyline points="1368,286 1372,313 1366,332 1362,349 1353,368 1351,384 1349,399 1343,420 1350,432 1362,440 1375,445"/>
<polyline points="942,259 955,262 968,255 985,258 1000,254 1020,262 1040,258 1055,266 1070,262 1082,270 1098,266 1110,275 1120,285 1135,282 1150,290 1160,283 1172,290 1185,284"/>
<polyline points="941,418 960,430 985,440 1010,452 1035,462 1060,470 1080,462 1095,450 1110,440 1125,425 1145,412 1165,400 1185,396 1200,385 1215,372"/>
<polyline points="1150,290 1160,305 1175,312 1190,322 1205,330 1222,338 1230,350 1222,362 1215,372 1228,385 1240,400 1235,420 1245,440 1240,460 1250,478 1247,488"/>
<polyline points="1222,338 1235,325 1250,312 1262,295 1270,280 1275,268"/>
<polyline points="1095,450 1105,465 1095,480 1110,492 1130,498 1150,488 1160,470 1150,455 1145,440 1135,428 1125,425"/>
<polyline points="1035,462 1045,480 1030,500 1040,520 1055,535 1050,555 1060,575 1045,595 1035,612 1010,618 990,625 970,630 950,635 935,630"/>
<polyline points="1035,612 1055,622 1080,618 1105,612 1130,605 1155,610 1180,615 1200,622 1215,640 1228,655 1240,670 1250,689"/>
<polyline points="1247,540 1235,560 1245,580 1240,600 1250,618 1265,628 1272,633"/>
<polyline points="1200,622 1210,605 1225,598 1240,600"/>
<polyline points="1272,633 1280,650 1290,660 1300,660"/>
<polyline points="1247,488 1262,502"/>
<polyline points="1309,448 1300,440 1310,430 1330,428 1343,420"/>
</g>
<g fill="none" stroke="#c3d4c0" stroke-width=".9" opacity=".8">
<path d="M900 265C900.8 270.8 905.0 290.0 905 300C905.0 310.0 905.0 320.8 900 325C895.0 329.2 879.2 325.0 875 325"/>
<path d="M1012 307C1016.7 310.8 1031.7 319.0 1040 330C1048.3 341.0 1058.3 365.8 1062 373"/>
<path d="M1001 380C1005.8 379.7 1019.8 379.0 1030 378C1040.2 377.0 1056.7 374.7 1062 374"/>
<path d="M1116 321C1121.7 324.2 1138.5 332.2 1150 340C1161.5 347.8 1179.2 363.3 1185 368"/>
<path d="M1185 368C1187.5 370.8 1194.2 379.3 1200 385C1205.8 390.7 1216.7 399.2 1220 402"/>
<path d="M1090 440 L1094 429"/>
<path d="M1003 386C998.3 386.7 982.5 390.2 975 390C967.5 389.8 960.8 385.8 958 385"/>
<path d="M1039 510C1042.5 515.0 1049.0 529.2 1060 540C1071.0 550.8 1097.5 569.2 1105 575"/>
<path d="M1105 575C1102.5 580.8 1097.8 596.5 1090 610C1082.2 623.5 1063.3 648.3 1058 656"/>
<path d="M1137 571C1144.2 571.7 1165.3 574.3 1180 575C1194.7 575.7 1217.5 575.0 1225 575"/>
<path d="M954 580C955.0 586.7 963.2 600.0 960 620C956.8 640.0 939.2 686.7 935 700"/>
<path d="M1124 702C1128.3 698.3 1139.8 684.5 1150 680C1160.2 675.5 1174.2 678.3 1185 675C1195.8 671.7 1202.2 663.3 1215 660C1227.8 656.7 1254.2 655.8 1262 655"/>
<path d="M1209 493 L1215 535"/>
<path d="M1209 493 L1170 495"/>
<path d="M1267 472C1262.5 475.0 1249.7 486.5 1240 490C1230.3 493.5 1214.2 492.5 1209 493"/>
<path d="M1296 340C1291.7 338.3 1281.3 333.7 1270 330C1258.7 326.3 1235.0 320.0 1228 318"/>
<path d="M1348 379C1351.7 382.5 1363.8 391.2 1370 400C1376.2 408.8 1382.5 426.7 1385 432"/>
<path d="M1348 379C1349.2 372.5 1352.0 353.2 1355 340C1358.0 326.8 1364.2 306.7 1366 300"/>
<path d="M1430 392C1431.7 386.7 1437.5 370.3 1440 360C1442.5 349.7 1444.2 335.0 1445 330"/>
<path d="M1478 385C1476.7 379.2 1470.8 360.7 1470 350C1469.2 339.3 1472.5 325.8 1473 321"/>
<path d="M1070 498C1070.8 505.0 1069.0 527.5 1075 540C1081.0 552.5 1100.8 567.5 1106 573"/>
<path d="M970 571C975.5 572.5 991.5 577.7 1003 580C1014.5 582.3 1027.0 585.0 1039 585C1051.0 585.0 1064.0 581.7 1075 580C1086.0 578.3 1100.0 575.8 1105 575"/>
<path d="M1225 575C1223.3 582.5 1220.8 607.5 1215 620C1209.2 632.5 1195.0 640.8 1190 650C1185.0 659.2 1185.8 670.8 1185 675"/>
</g>
<g fill="none" stroke="#a4b5d0" stroke-width="1.1" stroke-linecap="round" opacity=".8">
<path d="M850 238C854.2 240.0 866.7 245.5 875 250C883.3 254.5 891.7 260.0 900 265C908.3 270.0 915.8 275.5 925 280C934.2 284.5 948.8 289.7 955 292C961.2 294.3 957.2 291.8 962 294C966.8 296.2 978.8 301.0 984 305C989.2 309.0 989.0 311.3 993 318C997.0 324.7 1003.7 338.2 1008 345C1012.3 351.8 1013.7 353.2 1019 359C1024.3 364.8 1032.8 372.8 1040 380C1047.2 387.2 1055.7 394.8 1062 402C1068.3 409.2 1072.7 418.5 1078 423C1083.3 427.5 1088.7 425.3 1094 429C1099.3 432.7 1104.8 440.2 1110 445C1115.2 449.8 1122.5 455.8 1125 458"/>
<path d="M1000 240C1000.8 246.7 1003.0 268.8 1005 280C1007.0 291.2 1011.2 298.8 1012 307C1012.8 315.2 1011.0 322.2 1010 329C1009.0 335.8 1007.3 341.7 1006 348C1004.7 354.3 1002.8 361.7 1002 367C1001.2 372.3 1000.5 374.2 1001 380C1001.5 385.8 1003.8 394.7 1005 402C1006.2 409.3 1007.5 416.8 1008 424C1008.5 431.2 1008.8 438.2 1008 445C1007.2 451.8 1006.3 456.7 1003 465C999.7 473.3 993.5 485.0 988 495C982.5 505.0 973.7 515.8 970 525C966.3 534.2 966.3 542.2 966 550C965.7 557.8 967.3 563.7 968 572C968.7 580.3 969.3 592.0 970 600C970.7 608.0 970.7 611.2 972 620C973.3 628.8 975.5 644.3 978 653C980.5 661.7 984.2 667.0 987 672C989.8 677.0 993.7 681.2 995 683"/>
<path d="M1012 310C1014.5 310.7 1020.5 312.7 1027 314C1033.5 315.3 1042.5 317.2 1051 318C1059.5 318.8 1069.5 319.2 1078 319C1086.5 318.8 1095.7 316.7 1102 317C1108.3 317.3 1113.7 320.3 1116 321"/>
<path d="M1116 322C1112.3 324.0 1100.8 329.3 1094 334C1087.2 338.7 1080.3 343.5 1075 350C1069.7 356.5 1066.8 366.2 1062 373C1057.2 379.8 1051.8 384.3 1046 391C1040.2 397.7 1031.5 408.0 1027 413C1022.5 418.0 1022.2 419.2 1019 421C1015.8 422.8 1009.8 423.5 1008 424"/>
<path d="M1062 373C1063.8 369.2 1070.3 358.7 1073 350C1075.7 341.3 1076.3 330.3 1078 321C1079.7 311.7 1081.2 303.0 1083 294C1084.8 285.0 1087.0 277.3 1089 267C1091.0 256.7 1094.0 237.8 1095 232"/>
<path d="M1205 245C1201.7 248.8 1190.8 261.7 1185 268C1179.2 274.3 1174.3 279.2 1170 283C1165.7 286.8 1163.5 287.8 1159 291C1154.5 294.2 1149.3 297.5 1143 302C1136.7 306.5 1125.2 314.3 1121 318C1116.8 321.7 1118.8 319.0 1118 324C1117.2 329.0 1116.0 339.5 1116 348C1116.0 356.5 1116.7 366.0 1118 375C1119.3 384.0 1123.0 393.0 1124 402C1125.0 411.0 1123.2 421.8 1124 429C1124.8 436.2 1128.3 440.2 1129 445C1129.7 449.8 1128.2 455.8 1128 458"/>
<path d="M1124 321C1128.5 318.7 1143.3 309.8 1151 307C1158.7 304.2 1164.3 304.3 1170 304C1175.7 303.7 1180.0 302.7 1185 305C1190.0 307.3 1193.8 313.2 1200 318C1206.2 322.8 1214.2 327.5 1222 334C1229.8 340.5 1240.3 350.7 1247 357C1253.7 363.3 1258.2 368.3 1262 372C1265.8 375.7 1268.7 377.8 1270 379"/>
<path d="M1160 236C1160.8 240.0 1163.3 252.2 1165 260C1166.7 267.8 1167.8 277.2 1170 283C1172.2 288.8 1175.5 291.3 1178 295C1180.5 298.7 1183.8 303.3 1185 305"/>
<path d="M1128 458C1130.5 455.0 1136.0 444.8 1143 440C1150.0 435.2 1162.0 433.5 1170 429C1178.0 424.5 1182.7 417.5 1191 413C1199.3 408.5 1211.8 405.5 1220 402C1228.2 398.5 1231.7 395.8 1240 392C1248.3 388.2 1259.5 382.2 1270 379C1280.5 375.8 1293.0 373.7 1303 373C1313.0 372.3 1322.5 374.0 1330 375C1337.5 376.0 1341.7 377.2 1348 379C1354.3 380.8 1359.2 384.5 1368 386C1376.8 387.5 1390.7 387.0 1401 388C1411.3 389.0 1421.0 391.3 1430 392C1439.0 392.7 1447.5 393.2 1455 392C1462.5 390.8 1471.7 386.2 1475 385"/>
<path d="M826 330C830.0 329.7 841.8 328.8 850 328C858.2 327.2 865.8 323.8 875 325C884.2 326.2 895.0 331.7 905 335C915.0 338.3 922.3 343.5 935 345C947.7 346.5 968.8 344.0 981 344C993.2 344.0 1003.5 344.8 1008 345"/>
<path d="M848 238C846.7 241.3 841.7 251.8 840 258C838.3 264.2 839.3 268.8 838 275C836.7 281.2 833.7 289.2 832 295C830.3 300.8 829.0 304.2 828 310C827.0 315.8 826.3 326.7 826 330"/>
<path d="M1062 374C1066.5 374.2 1080.0 374.7 1089 375C1098.0 375.3 1102.5 376.0 1116 376C1129.5 376.0 1158.5 376.3 1170 375C1181.5 373.7 1178.3 370.2 1185 368C1191.7 365.8 1201.7 364.2 1210 362C1218.3 359.8 1230.8 356.2 1235 355"/>
<path d="M1062 375C1062.5 377.7 1061.5 387.5 1065 391C1068.5 394.5 1079.5 392.3 1083 396C1086.5 399.7 1084.2 407.5 1086 413C1087.8 418.5 1092.7 426.3 1094 429"/>
<path d="M1008 424C1011.2 424.3 1020.7 424.3 1027 426C1033.3 427.7 1040.2 431.7 1046 434C1051.8 436.3 1054.7 439.0 1062 440C1069.3 441.0 1085.3 440.0 1090 440"/>
<path d="M905 232C909.2 231.7 920.8 230.3 930 230C939.2 229.7 946.7 229.7 960 230C973.3 230.3 993.3 231.0 1010 232C1026.7 233.0 1045.8 235.7 1060 236C1074.2 236.3 1083.3 234.3 1095 234C1106.7 233.7 1119.2 233.7 1130 234C1140.8 234.3 1150.8 235.0 1160 236C1169.2 237.0 1177.5 238.5 1185 240C1192.5 241.5 1201.7 244.2 1205 245"/>
<path d="M1270 379C1273.3 373.7 1284.5 357.2 1290 347C1295.5 336.8 1298.7 326.7 1303 318C1307.3 309.3 1313.8 298.8 1316 295"/>
<path d="M1348 379C1343.7 374.7 1330.7 359.5 1322 353C1313.3 346.5 1300.3 342.2 1296 340"/>
<path d="M1205 245C1206.7 248.3 1211.7 258.3 1215 265C1218.3 271.7 1222.8 276.2 1225 285C1227.2 293.8 1226.3 307.2 1228 318C1229.7 328.8 1233.8 344.7 1235 350"/>
<path d="M1270 379C1268.5 383.3 1263.7 395.2 1261 405C1258.3 414.8 1253.5 427.0 1254 438C1254.5 449.0 1259.2 462.3 1264 471C1268.8 479.7 1275.3 484.3 1283 490C1290.7 495.7 1300.5 500.0 1310 505C1319.5 510.0 1335.0 517.5 1340 520"/>
<path d="M1503 300C1502.5 303.3 1500.8 313.7 1500 320C1499.2 326.3 1500.0 331.0 1498 338C1496.0 345.0 1491.3 354.2 1488 362C1484.7 369.8 1483.5 378.7 1478 385C1472.5 391.3 1463.0 395.8 1455 400C1447.0 404.2 1438.3 407.2 1430 410C1421.7 412.8 1412.5 413.3 1405 417C1397.5 420.7 1390.5 426.8 1385 432C1379.5 437.2 1375.8 441.7 1372 448C1368.2 454.3 1365.7 461.3 1362 470C1358.3 478.7 1353.3 491.3 1350 500C1346.7 508.7 1344.5 514.5 1342 522C1339.5 529.5 1335.7 537.0 1335 545C1334.3 553.0 1338.8 561.2 1338 570C1337.2 578.8 1333.8 589.7 1330 598C1326.2 606.3 1320.0 613.0 1315 620C1310.0 627.0 1305.8 635.0 1300 640C1294.2 645.0 1286.3 647.5 1280 650C1273.7 652.5 1268.7 650.8 1262 655C1255.3 659.2 1247.8 667.5 1240 675C1232.2 682.5 1222.5 692.8 1215 700C1207.5 707.2 1200.8 713.0 1195 718C1189.2 723.0 1182.5 728.0 1180 730"/>
<path d="M1180 730C1175.0 730.0 1160.0 729.7 1150 730C1140.0 730.3 1128.3 731.0 1120 732C1111.7 733.0 1105.8 734.7 1100 736C1094.2 737.3 1091.7 736.8 1085 740C1078.3 743.2 1067.5 750.8 1060 755C1052.5 759.2 1046.7 761.7 1040 765C1033.3 768.3 1023.3 773.3 1020 775"/>
<path d="M1125 465C1120.8 467.5 1109.2 474.5 1100 480C1090.8 485.5 1080.2 493.0 1070 498C1059.8 503.0 1050.2 505.8 1039 510C1027.8 514.2 1011.7 517.7 1003 523C994.3 528.3 992.5 534.0 987 542C981.5 550.0 975.5 564.7 970 571C964.5 577.3 956.7 578.5 954 580"/>
<path d="M1128 465C1128.7 470.0 1131.2 485.3 1132 495C1132.8 504.7 1132.2 510.3 1133 523C1133.8 535.7 1137.0 554.8 1137 571C1137.0 587.2 1135.8 608.0 1133 620C1130.2 632.0 1127.2 638.0 1120 643C1112.8 648.0 1100.3 647.8 1090 650C1079.7 652.2 1068.7 652.3 1058 656C1047.3 659.7 1035.7 667.5 1026 672C1016.3 676.5 1004.3 681.2 1000 683"/>
<path d="M1000 683C1005.8 685.8 1023.2 694.7 1035 700C1046.8 705.3 1060.2 713.7 1071 715C1081.8 716.3 1091.2 710.2 1100 708C1108.8 705.8 1114.7 703.7 1124 702C1133.3 700.3 1146.7 698.3 1156 698C1165.3 697.7 1175.2 695.0 1180 700C1184.8 705.0 1184.2 723.3 1185 728"/>
<path d="M1120 643C1120.3 647.5 1121.2 660.5 1122 670C1122.8 679.5 1123.7 691.7 1125 700C1126.3 708.3 1128.3 714.2 1130 720C1131.7 725.8 1134.2 732.5 1135 735"/>
<path d="M1058 656C1059.2 660.0 1063.0 672.7 1065 680C1067.0 687.3 1067.5 693.3 1070 700C1072.5 706.7 1077.2 714.5 1080 720C1082.8 725.5 1085.8 730.8 1087 733"/>
<path d="M990 683C985.0 684.7 969.2 690.2 960 693C950.8 695.8 942.5 698.0 935 700C927.5 702.0 918.3 704.2 915 705"/>
<path d="M995 690C993.8 693.7 989.7 705.3 988 712C986.3 718.7 987.2 723.3 985 730C982.8 736.7 976.7 748.3 975 752"/>
<path d="M1130 465C1133.3 467.5 1143.3 475.0 1150 480C1156.7 485.0 1162.5 489.2 1170 495C1177.5 500.8 1187.5 508.3 1195 515C1202.5 521.7 1207.5 530.5 1215 535C1222.5 539.5 1232.5 540.3 1240 542C1247.5 543.7 1250.0 544.0 1260 545C1270.0 546.0 1287.5 547.5 1300 548C1312.5 548.5 1329.2 548.0 1335 548"/>
<path d="M1215 535C1216.2 538.3 1220.3 548.3 1222 555C1223.7 561.7 1221.2 568.3 1225 575C1228.8 581.7 1238.3 589.2 1245 595C1251.7 600.8 1258.3 605.0 1265 610C1271.7 615.0 1278.3 620.5 1285 625C1291.7 629.5 1301.7 635.0 1305 637"/>
<path d="M1225 575C1226.7 579.2 1231.7 592.5 1235 600C1238.3 607.5 1241.7 613.3 1245 620C1248.3 626.7 1251.7 634.2 1255 640C1258.3 645.8 1262.2 650.8 1265 655C1267.8 659.2 1269.5 662.2 1272 665C1274.5 667.8 1278.7 670.8 1280 672"/>
<path d="M1125 468C1122.8 471.3 1115.8 481.8 1112 488C1108.2 494.2 1103.7 502.2 1102 505"/>
<path d="M1105 575C1107.5 574.8 1114.8 574.5 1120 574C1125.2 573.5 1133.3 572.3 1136 572"/>
<path d="M1102 505C1106.7 504.2 1118.7 501.7 1130 500C1141.3 498.3 1163.3 495.8 1170 495"/>
</g>
<g font-family="DejaVu Sans, sans-serif" font-size="10" fill="#3b3b3b" stroke="#fff" stroke-opacity=".85" stroke-width="2.2" paint-order="stroke" stroke-linejoin="round">
<text x="830" y="245.8" text-anchor="start">A Coruña</text>
<text x="900.5" y="273.8" text-anchor="middle">Lugo</text>
<text x="1013.5" y="305.8" text-anchor="middle">León</text>
<text x="1120" y="325.8" text-anchor="middle">Burgos</text>
<text x="1003" y="389.8" text-anchor="middle">Zamora</text>
<text x="1008" y="430.8" text-anchor="middle">Salamanca</text>
<text x="1062" y="453.8" text-anchor="middle">Ávila</text>
<text x="1096" y="470.8" text-anchor="start">Madrid</text>
<text x="1089" y="238.3" text-anchor="start">Santander</text>
<text x="1278.5" y="248.8" text-anchor="end">/ San Sebastián</text>
<text x="1307" y="340.8" text-anchor="middle">Huesca</text>
<text x="1365.5" y="381.3" text-anchor="middle">Lleida</text>
<text x="1393" y="415.8" text-anchor="middle">Reus</text>
<text x="1479" y="398.8" text-anchor="end">Barcelona</text>
<text x="1267" y="476.4" text-anchor="middle">Teruel</text>
<text x="1209" y="496.8" text-anchor="middle">Cuenca</text>
<text x="1179" y="369.8" text-anchor="start">Soria</text>
<text x="1375" y="503.8" text-anchor="end">Castelló de la Plana</text>
<text x="1101" y="513.3" text-anchor="middle">Toledo</text>
<text x="1106.5" y="577.5" text-anchor="middle">Ciudad Real</text>
<text x="933.5" y="584.8" text-anchor="middle">Badajoz</text>
<text x="1058" y="656.8" text-anchor="middle">Córdoba</text>
<text x="1114.5" y="664.8" text-anchor="middle">Jaén</text>
<text x="935" y="702.3" text-anchor="middle">Huelva</text>
<text x="973.7" y="692.6" text-anchor="start">Sevilla</text>
<text x="959" y="753.5" text-anchor="start">Cádiz</text>
<text x="1171" y="731.8" text-anchor="start">Almería</text>
<text x="1224.3" y="576.2" text-anchor="middle">Albacete</text>
<text x="1265" y="628.8" text-anchor="start">Elche</text>
<text x="822" y="331.8" text-anchor="start">Vigo</text>
</g>
<g font-family="DejaVu Sans, sans-serif" font-style="italic" font-size="10" fill="#b88ac4" stroke="#fff" stroke-opacity=".8" stroke-width="2" paint-order="stroke" stroke-linejoin="round">
<text x="938" y="249.8" text-anchor="start">Principado de Asturias</text>
<text x="1097.5" y="262.8" text-anchor="middle">Cantabria</text>
<text x="1059.7" y="366.3" text-anchor="middle">Castilla y León</text>
<text x="1189.7" y="326.8" text-anchor="middle">La Rioja</text>
<text x="1286.7" y="398.8" text-anchor="middle">Aragón</text>
<text x="1419.3" y="362.8" text-anchor="middle">Catalunya</text>
<text x="980" y="563.2" text-anchor="middle">Extremadura</text>
<text x="1135" y="545.3" text-anchor="start">Castilla-La Mancha</text>
<text x="1069.3" y="696.5" text-anchor="middle">Andalucía</text>
<text x="1203.5" y="654.4" text-anchor="start">Región de Murcia</text>
<text x="1522" y="536.2" text-anchor="middle">Illes Balears</text>
<text x="1287" y="525.4" text-anchor="middle">Comunitat Valenciana</text>
</g>
<g fill="#f7a85a" fill-opacity=".5" stroke="#8c6f63" stroke-width="1.4" stroke-linejoin="round">
<polygon points="856,214 846,226 836,236 830,243 820,252 808,262 801,270 804,280 812,286 811,295 824,295 814,306 822,310 820,321 826,328 830,334 825,340 825,357 834,349 843,341 853,343 863,347 866,354 868,361 875,356 882,353 895,358 908,362 918,354 928,347 935,340 941,332 946,321 940,311 928,307 927,296 925,285 932,268 942,259 934,253 926,247 921,240 917,232 912,222 908,214"/>
<polygon points="1309,448 1322,439 1332,445 1343,443 1346,450 1353,462 1362,488 1355,496 1349,509 1330,500 1305,498 1300,488 1306,478 1314,465 1312,456"/>
<polygon points="1247,488 1256,482 1269,494 1252,497"/>
<polygon points="1262,502 1274,499 1280,507 1291,500 1310,498 1349,509 1347,518 1345,529 1347,540 1352,555 1358,563 1365,572 1355,588 1346,600 1336,613 1320,632 1313,643 1300,652 1290,650 1278,644 1272,633 1272,597 1277,580 1259,568 1262,549 1247,540 1249,530 1246,529 1259,513"/>
</g>
<g fill="none" stroke="#c79f7c" stroke-width="1" opacity=".9">
<path d="M848 238C850.3 239.3 856.7 245.7 862 246C867.3 246.3 873.7 240.0 880 240C886.3 240.0 893.8 247.3 900 246C906.2 244.7 914.2 234.3 917 232"/>
<path d="M862 246C861.3 248.7 857.3 256.3 858 262C858.7 267.7 865.3 273.7 866 280C866.7 286.3 861.3 294.2 862 300C862.7 305.8 868.7 312.5 870 315"/>
<path d="M900 246C899.3 248.7 895.2 257.2 896 262C896.8 266.8 900.2 271.2 905 275C909.8 278.8 921.7 283.3 925 285"/>
<path d="M866 280C869.2 279.7 878.5 278.8 885 278C891.5 277.2 901.7 275.5 905 275"/>
<path d="M830 296C833.0 296.7 842.7 299.3 848 300C853.3 300.7 856.7 299.2 862 300C867.3 300.8 873.7 305.0 880 305C886.3 305.0 892.2 301.5 900 300C907.8 298.5 922.5 296.7 927 296"/>
<path d="M900 300C900.8 303.3 901.7 315.0 905 320C908.3 325.0 914.0 328.0 920 330C926.0 332.0 937.5 331.7 941 332"/>
<path d="M843 341C845.0 339.2 850.5 334.3 855 330C859.5 325.7 865.0 315.8 870 315C875.0 314.2 879.2 324.2 885 325C890.8 325.8 901.7 320.8 905 320"/>
</g>
<g transform="translate(870.7 228.5)"><use href="#mk"/><use href="#works"/>
</g>
<g transform="translate(877.6 224.4)"><use href="#mk"/><use href="#works"/>
</g>
<g transform="translate(925 227.8)"><use href="#mk"/><use href="#wind"/>
</g>
<circle cx="913.9" cy="218" r="6.9" fill="url(#bg)"/>
<g transform="translate(972.4 242.5)"><use href="#mk"/><use href="#works"/>
</g>
<g transform="translate(980.8 239.7)"><use href="#mk"/><use href="#works"/>
</g>
<circle cx="961.3" cy="229.2" r="6.9" fill="url(#by)"/>
<circle cx="970.3" cy="227.8" r="6.9" fill="url(#by)"/>
<g transform="translate(1011.3 221)"><use href="#mk"/><use href="#turnL"/>
</g>
<g transform="translate(1062.1 236.7)"><use href="#mk"/><use href="#works"/>
</g>
<g transform="translate(1042 236.7)"><use href="#mk"/><use href="#works"/>
</g>
<circle cx="1031.4" cy="224.2" r="6.9" fill="url(#bk)"/>
<g transform="translate(1008.8 261.1)"><use href="#mk"/><use href="#snow"/>
</g>
<g transform="translate(942.4 287)"><use href="#mk"/><use href="#turnR"/>
</g>
<g transform="translate(878.7 296.1)"><use href="#rk"/><use href="#truck"/>
</g>
<use href="#plus" x="867.2" y="285.7"/>
<g transform="translate(844 323.3)"><use href="#mk"/><use href="#works"/>
</g>
<g transform="translate(866.5 322.6)"><use href="#mk"/><use href="#turnR"/>
</g>
<circle cx="854.6" cy="312.2" r="6.9" fill="url(#by)"/>
<g transform="translate(1156.8 243)"><use href="#mk"/><use href="#works"/>
</g>
<g transform="translate(1171.2 234.2)"><use href="#mk"/><use href="#works"/>
</g>
<g transform="translate(1138.6 231.7)"><use href="#mk"/><use href="#cars"/>
</g>
<circle cx="1127.3" cy="219.8" r="6.9" fill="url(#by)"/>
<g transform="translate(1178 257.4)"><use href="#mk"/><use href="#works"/>
</g>
<g transform="translate(1195.6 264.3)"><use href="#mk"/><use href="#works"/>
</g>
<circle cx="1185" cy="252.4" r="6.9" fill="url(#br)"/>
<g transform="translate(1167.4 276.2)"><use href="#mk"/><use href="#snow"/>
</g>
<g transform="translate(1199.3 358.3)"><use href="#rk"/><use href="#truck"/>
</g>
<g transform="translate(1247.5 390.8)"><use href="#mk"/><use href="#turnR"/>
</g>
<circle cx="1236" cy="379.4" r="6.9" fill="url(#br)"/>
<g transform="translate(1320.6 281.5)"><use href="#mk"/><use href="#turnL"/>
</g>
<circle cx="1310" cy="270" r="6.9" fill="url(#by)"/>
<g transform="translate(1334.9 290.1)"><use href="#mk"/><use href="#turnR"/>
</g>
<circle cx="1324.4" cy="278.6" r="6.9" fill="url(#bk)"/>
<g transform="translate(1407.4 386.5)"><use href="#mk"/><use href="#turnR"/>
</g>
<g transform="translate(1427.5 402.8)"><use href="#mk"/><use href="#turnR"/>
</g>
<g transform="translate(1517.2 352.2)"><use href="#mk"/><use href="#works"/>
</g>
<g transform="translate(1511.5 353.1)"><use href="#mk"/><use href="#car"/>
</g>
<circle cx="1499.5" cy="341.7" r="6.9" fill="url(#by)"/>
<g transform="translate(1500 366.5)"><use href="#mk"/><use href="#works"/>
</g>
<g transform="translate(1474.3 373.2)"><use href="#mk"/><use href="#car"/>
</g>
<circle cx="1463.8" cy="362.7" r="6.9" fill="url(#br)"/>
<g transform="translate(1492.4 360.8)"><use href="#mk"/><use href="#turnR"/>
</g>
<circle cx="1480" cy="348.9" r="6.9" fill="url(#bk)"/>
<g transform="translate(1007.2 423.7)"><use href="#mk"/><use href="#turnR"/>
</g>
<g transform="translate(1102.7 438.3)"><use href="#mk"/><use href="#cross"/>
</g>
<g transform="translate(1136.6 444)"><use href="#mk"/><use href="#cars"/>
</g>
<circle cx="1126.5" cy="433.8" r="6.9" fill="url(#by)"/>
<g transform="translate(1132.6 480.8)"><use href="#mk"/><use href="#cars"/>
</g>
<g transform="translate(1122.5 459.5)"><use href="#mk"/><use href="#car"/>
</g>
<use href="#plus" x="1113.9" y="445.4"/>
<g transform="translate(1146.7 456.5)"><use href="#mk"/><use href="#cars"/>
</g>
<circle cx="1135" cy="445" r="6.9" fill="url(#by)"/>
<g transform="translate(1357 465.8)"><use href="#mk"/><use href="#works"/>
</g>
<g transform="translate(1353.4 469.4)"><use href="#mk"/><use href="#works"/>
</g>
<g transform="translate(1323.5 488.4)"><use href="#mk"/><use href="#works"/>
</g>
<g transform="translate(1344 494)"><use href="#mk"/><use href="#works"/>
</g>
<g transform="translate(1306 498.6)"><use href="#mk"/><use href="#works"/>
</g>
<g transform="translate(1310.3 503)"><use href="#mk"/><use href="#works"/>
</g>
<g transform="translate(1333 506)"><use href="#mk"/><use href="#works"/>
</g>
<g transform="translate(1224.8 529.9)"><use href="#mk"/><use href="#works"/>
</g>
<g transform="translate(1323.5 532)"><use href="#mk"/><use href="#works"/>
</g>
<g transform="translate(1287.7 532.2)"><use href="#mk"/><use href="#works"/>
</g>
<g transform="translate(1319.8 546)"><use href="#mk"/><use href="#works"/>
</g>
<g transform="translate(1333.3 562)"><use href="#mk"/><use href="#works"/>
</g>
<g transform="translate(1342.7 577.8)"><use href="#mk"/><use href="#works"/>
</g>
<g transform="translate(1336.4 571.5)"><use href="#mk"/><use href="#works"/>
</g>
<circle cx="1323" cy="570" r="6.9" fill="url(#bk)"/>
<g transform="translate(1336.4 603)"><use href="#mk"/><use href="#works"/>
</g>
<g transform="translate(1314.4 607.7)"><use href="#mk"/><use href="#works"/>
</g>
<g transform="translate(1320.7 617)"><use href="#mk"/><use href="#works"/>
</g>
<g transform="translate(1295.5 598.2)"><use href="#mk"/><use href="#works"/>
</g>
<g transform="translate(1331.7 588.8)"><use href="#mk"/><use href="#works"/>
</g>
<circle cx="1320" cy="578.5" r="6.9" fill="url(#bk)"/>
<g transform="translate(1297 648.6)"><use href="#mk"/><use href="#works"/>
</g>
<g transform="translate(1288.4 618.7)"><use href="#mk"/><use href="#works"/>
</g>
<use href="#plus" x="1276.3" y="606.9"/>
<g transform="translate(1301 637.5)"><use href="#mk"/><use href="#works"/>
</g>
<g transform="translate(983.5 558.4)"><use href="#mk"/><use href="#cars"/>
</g>
<use href="#plus" x="972" y="547"/>
<g transform="translate(1126.2 636)"><use href="#mk"/><use href="#cars"/>
</g>
<use href="#plus" x="1114.5" y="624.6"/>
<g transform="translate(1002 687)"><use href="#mk"/><use href="#car"/>
</g>
<g transform="translate(997.2 682.5)"><use href="#mk"/><use href="#car"/>
</g>
<use href="#plus" x="988.5" y="668.3"/>
<g transform="translate(1021.6 677)"><use href="#mk"/><use href="#turnR"/>
</g>
<circle cx="1009.8" cy="666" r="6.9" fill="url(#br)"/>
<g transform="translate(1134 691.1)"><use href="#rk"/><use href="#xxl"/>
<text x="0" y="9.5" text-anchor="middle" font-family="Liberation Sans,sans-serif" font-weight="bold" font-size="11.5" fill="#55585e" letter-spacing=".3">XXL</text>
</g>
<g transform="translate(1184.4 674.6)"><use href="#mk"/><use href="#turnR"/>
</g>
<circle cx="1175" cy="662" r="6.9" fill="url(#by)"/>
<g transform="translate(1231.6 696.6)"><use href="#mk"/><use href="#works"/>
</g>
<g transform="translate(1214.3 688.8)"><use href="#mk"/><use href="#works"/>
</g>
<circle cx="1203.3" cy="677" r="6.9" fill="url(#bk)"/>
<g transform="translate(1199.3 722.6)"><use href="#mk"/><use href="#works"/>
</g>
<circle cx="1187.5" cy="710.8" r="6.9" fill="url(#br)"/>
<circle cx="987.5" cy="746" r="18.5" fill="#eef1f8" stroke="#b5202c" stroke-width="1.6"/>
<g transform="translate(990 747)"><use href="#mk"/><use href="#cars"/>
</g>
<circle cx="979.9" cy="736" r="6.9" fill="url(#by)"/>
<g transform="translate(1031.8 767.4)"><use href="#mk"/><use href="#cars"/>
</g>
<circle cx="1020" cy="757.2" r="6.9" fill="url(#by)"/>
<g transform="translate(1057 747)"><use href="#mk"/><use href="#cars"/>
</g>
<use href="#plus" x="1046.3" y="735.2"/>
<g transform="translate(1086.9 729.7)"><use href="#mk"/><use href="#cars"/>
</g>
<circle cx="1075.8" cy="718.7" r="6.9" fill="url(#by)"/>
<g transform="translate(1518 499.8)"><use href="#mk"/><use href="#turnR"/>
</g>
<g transform="translate(1584.8 499.8)"><use href="#mk"/><use href="#works"/>
</g>
<circle cx="1573.4" cy="490" r="6.9" fill="url(#bk)"/>
<defs><linearGradient id="tb" x1="0" y1="0" x2="0" y2="1"><stop offset="0" stop-color="#86b6c4"/><stop offset=".5" stop-color="#4f8fa3"/><stop offset="1" stop-color="#2c6f85"/></linearGradient><linearGradient id="hb" x1="0" y1="0" x2="0" y2="1"><stop offset="0" stop-color="#9cccd9"/><stop offset="1" stop-color="#4287a0"/></linearGradient><linearGradient id="lg" x1="0" y1="0" x2="1" y2="1"><stop offset="0" stop-color="#d2d2d2"/><stop offset="1" stop-color="#9c9c9c"/></linearGradient></defs>
<path d="M388 249L388 235Q388 225.5 399 225.5Q410 225.5 410 235L410 249Z" fill="url(#tb)"/>
<path d="M388 271L388 285Q388 294 399 294Q410 294 410 285L410 271Z" fill="url(#tb)"/>
<rect x="376" y="249" width="45.5" height="22" rx="8.5" fill="url(#tb)"/>
<rect x="398.4" y="251" width="1" height="18" fill="#2d6f83" opacity=".7"/>
<path d="M398.8 231.5L405.8 243L392.2 243Z M398.8 288.8L405.8 277.3L392.2 277.3Z M381 259.9L393 253.3L393 266.5Z M416.3 259.9L405 253.3L405 266.5Z" fill="#fff"/>
<path d="M388 322L388 310Q388 300.5 399 300.5Q410 300.5 410 310L410 322Z" fill="url(#tb)"/>
<path d="M392.5 312L405.2 312M398.8 305.6L398.8 318.4" stroke="#fff" stroke-width="2.6" fill="none"/>
<rect x="388.6" y="322" width="20.8" height="167" fill="#8f9a9b" stroke="#3d4647" stroke-width="1.2"/>
<rect x="389" y="335.3" width="20" height="1.3" fill="#3d4647"/>
<rect x="389" y="349.2" width="20" height="1.3" fill="#3d4647"/>
<rect x="389" y="363.1" width="20" height="1.3" fill="#3d4647"/>
<rect x="389" y="377.0" width="20" height="1.3" fill="#3d4647"/>
<rect x="389" y="390.9" width="20" height="1.3" fill="#3d4647"/>
<rect x="389" y="404.8" width="20" height="1.3" fill="#3d4647"/>
<rect x="389" y="418.7" width="20" height="1.3" fill="#3d4647"/>
<rect x="389" y="432.6" width="20" height="1.3" fill="#3d4647"/>
<rect x="389" y="446.5" width="20" height="1.3" fill="#3d4647"/>
<rect x="389" y="460.4" width="20" height="1.3" fill="#3d4647"/>
<rect x="389" y="474.3" width="20" height="1.3" fill="#3d4647"/>
<path d="M388 488.5L388 501Q388 510.5 399 510.5Q410 510.5 410 501L410 488.5Z" fill="url(#tb)"/>
<rect x="392.7" y="496.8" width="12.4" height="2.6" fill="#fff"/>
<rect x="385.6" y="429.4" width="25.8" height="10.2" rx="3" fill="url(#hb)"/>
<rect x="381.5" y="554" width="35.3" height="34.8" rx="2.5" fill="url(#tb)" stroke="#3a7d92" stroke-width="1"/>
<circle cx="398.6" cy="570.6" r="8.6" fill="none" stroke="#fff" stroke-width="2.8"/><path d="M404.8 577L413.6 585.3" stroke="#fff" stroke-width="3.6" stroke-linecap="round"/><path d="M394.4 570.6L402.8 570.6M398.6 566.4L398.6 574.8" stroke="#fff" stroke-width="2.2"/>
<rect x="1832.6" y="237.6" width="50.6" height="40.1" rx="9.5" fill="#6f8f93" opacity=".8"/>
<rect x="1831.1" y="236.1" width="50.6" height="40.1" rx="9.5" fill="#fff"/>
<path d="M1856 252.8L1872.2 261.6L1856 270.4L1839.8 261.6Z" fill="url(#lg)" stroke="#8b8b8b" stroke-width=".9"/>
<path d="M1856 246.6L1872.2 255.4L1856 264.2L1839.8 255.4Z" fill="url(#lg)" stroke="#8b8b8b" stroke-width=".9"/>
<path d="M1856 240.4L1872.2 249.2L1856 258.0L1839.8 249.2Z" fill="url(#lg)" stroke="#8b8b8b" stroke-width=".9"/>
<rect x="1839.1" y="732.1" width="54.6" height="30" rx="10" fill="#fff" opacity=".93"/>
<g transform="translate(1843.2 735.8) scale(0.514 0.595)"><path d="M17.7 0L31.2 0L27.7 12.6L2.9 12.6L3.8 9.1L11 9.1Q14.6 9.1 15.6 6.6Z" fill="#0d4f8f"/><path d="M0.7 15.7L32.1 15.7L31.5 20.1L0 20.1Z" fill="#4fb0e8"/><path d="M7.3 22.6L30.2 22.6L29.3 26.1L21.5 26.1Q18.9 26.1 17.9 28.6L14.5 36.8L1.9 36.8L5.1 28Q6 24.4 7.3 22.6Z" fill="#0d4f8f"/></g>
<text x="1861.2" y="752" font-family="Liberation Sans,sans-serif" font-weight="bold" font-style="italic" font-size="14.6" fill="#0e4a86" textLength="28.5" lengthAdjust="spacingAndGlyphs">DGT</text>
<text x="370" y="770.6" font-family="Liberation Sans,sans-serif" font-size="10" fill="#222" textLength="162.4" lengthAdjust="spacing">Data CC-By-SA by <tspan fill="#1a1ad8" text-decoration="underline">OpenStreetMap</tspan></text>
<rect x="1898" y="216" width="1" height="563" fill="#9aa6a6"/>
</svg><!--/MAP--></div>

<i style="left:365px;top:215px;width:1534px;height:1px;background:#aab4b5"></i>
<div id="gbar"></div><div id="bbar"></div><div id="leg"></div>
<i class="cb" style="left:387.9px;top:787.2px"><svg width="14.6" height="14.6" viewBox="0 0 13 13"><path d="M2.7 6.6L5.2 9.3L10.3 3.4" fill="none" stroke="#fff" stroke-width="2"/></svg></i><span class="t gt" style="left:429px">Niveles de circulación</span>
<i class="cb" style="left:1174.7px;top:787.2px"><svg width="14.6" height="14.6" viewBox="0 0 13 13"><path d="M2.7 6.6L5.2 9.3L10.3 3.4" fill="none" stroke="#fff" stroke-width="2"/></svg></i><span class="t gt" style="left:1221px">Info sensores</span><i class="wsep" style="left:1305px"></i>
<i class="cb" style="left:1313.3px;top:787.2px"><svg width="14.6" height="14.6" viewBox="0 0 13 13"><path d="M2.7 6.6L5.2 9.3L10.3 3.4" fill="none" stroke="#fff" stroke-width="2"/></svg></i><span class="t gt" style="left:1360px">Cámaras</span><i class="wsep" style="left:1418px"></i>
<i class="cb" style="left:1425.4px;top:787.2px"><svg width="14.6" height="14.6" viewBox="0 0 13 13"><path d="M2.7 6.6L5.2 9.3L10.3 3.4" fill="none" stroke="#fff" stroke-width="2"/></svg></i><span class="t gt" style="left:1472px">Paneles</span><i class="wsep" style="left:1524px"></i>
<i class="cb" style="left:1531.3px;top:787.2px"><svg width="14.6" height="14.6" viewBox="0 0 13 13"><path d="M2.7 6.6L5.2 9.3L10.3 3.4" fill="none" stroke="#fff" stroke-width="2"/></svg></i><span class="t gt" style="left:1578px">Radares</span><i class="wsep" style="left:1633px"></i>
<i class="cb" style="left:1640.2px;top:787.2px"><svg width="14.6" height="14.6" viewBox="0 0 13 13"><path d="M2.7 6.6L5.2 9.3L10.3 3.4" fill="none" stroke="#fff" stroke-width="2"/></svg></i><span class="t gt" style="left:1687px">Estaciones meteorológicas</span>
<i class="cb" style="left:387.9px;top:825.2px"><svg width="14.6" height="14.6" viewBox="0 0 13 13"><path d="M2.7 6.6L5.2 9.3L10.3 3.4" fill="none" stroke="#fff" stroke-width="2"/></svg></i><span class="t bt" style="left:435px">Restricciones</span>
<i class="cb" style="left:1302.3px;top:825.2px"><svg width="14.6" height="14.6" viewBox="0 0 13 13"><path d="M2.7 6.6L5.2 9.3L10.3 3.4" fill="none" stroke="#fff" stroke-width="2"/></svg></i><span class="t bt" style="left:1325px">Retenciones</span>
<i class="cb off" style="left:1417.2px;top:825.2px"></i><span class="t bt" style="left:1440px">Obras</span>
<i class="cb" style="left:1489px;top:825.2px"><svg width="14.6" height="14.6" viewBox="0 0 13 13"><path d="M2.7 6.6L5.2 9.3L10.3 3.4" fill="none" stroke="#fff" stroke-width="2"/></svg></i><span class="t bt" style="left:1511px">Puertos</span>
<i class="cb" style="left:1572px;top:825.2px"><svg width="14.6" height="14.6" viewBox="0 0 13 13"><path d="M2.7 6.6L5.2 9.3L10.3 3.4" fill="none" stroke="#fff" stroke-width="2"/></svg></i><span class="t bt" style="left:1595px">Meteorológicos</span>
<i class="cb" style="left:1706.5px;top:825.2px"><svg width="14.6" height="14.6" viewBox="0 0 13 13"><path d="M2.7 6.6L5.2 9.3L10.3 3.4" fill="none" stroke="#fff" stroke-width="2"/></svg></i><span class="t bt" style="left:1729px">Eventos</span>
<i class="cb" style="left:1793px;top:825.2px"><svg width="14.6" height="14.6" viewBox="0 0 13 13"><path d="M2.7 6.6L5.2 9.3L10.3 3.4" fill="none" stroke="#fff" stroke-width="2"/></svg></i><span class="t bt" style="left:1815px">Otros</span>
<span class="t lt" style="left:375px">NIVELES DE CIRCULACIÓN:</span>
<i class="ball" style="left:571px;background:radial-gradient(circle at 35% 30%,#777,#111 55%,#000)"></i><span class="t lt" style="left:593px">Interrumpida</span><i class="vsep" style="left:677px;top:861px;height:11px;background:#bbb"></i>
<i class="ball" style="left:683px;background:radial-gradient(circle at 35% 30%,#ff8a8a,#d8232f 55%,#a8101c)"></i><span class="t lt" style="left:706px">Difícil</span><i class="vsep" style="left:746px;top:861px;height:11px;background:#bbb"></i>
<i class="ball" style="left:752px;background:radial-gradient(circle at 35% 30%,#fff9a8,#e3d43a 55%,#a99a1c)"></i><span class="t lt" style="left:774px">Irregular</span><i class="vsep" style="left:831px;top:861px;height:11px;background:#bbb"></i>
<i class="ball" style="left:838px;background:radial-gradient(circle at 35% 30%,#c9f5b4,#74cf58 55%,#4a9c36)"></i><span class="t lt" style="left:861px">Condicionada</span>
<span class="t lt" style="left:1781px;color:#3a5773">Ver otras leyendas</span>

<!--UI--><svg style="left:138px;top:193px" width="186" height="37" viewBox="138 193 186 37"><g transform="translate(145.8 205.2) scale(1)"><rect x="0" y="0" width="17.6" height="10" rx="1.3" fill="#fff" stroke="#4b8799" stroke-width="1.5"/><rect x="2.2" y="2.2" width="4.6" height="5.6" fill="#4b8799"/><path d="M8.4 3h6.6M8.4 5h6.6M8.4 7h6.6" stroke="#4b8799" stroke-width="1"/><path d="M4 10.5v5.5M13.6 10.5v5.5" stroke="#4b8799" stroke-width="1.6"/></g><g transform="translate(184.4 205.6) scale(1)"><rect x="0" y="0" width="11" height="8" rx="1" fill="#fff" stroke="#4b8799" stroke-width="1.5"/><path d="M11.5 2.2L16 0.2L16 7.8L11.5 5.8Z" fill="#4b8799" stroke="#4b8799" stroke-width=".8"/><path d="M4.5 8.5L7.5 12L10 14.2" stroke="#4b8799" stroke-width="1.7" fill="none"/><path d="M6.5 10.5L10.5 13.6" stroke="#fff" stroke-width=".7"/></g><g transform="translate(221.4 205.6) scale(1)"><path d="M1 0L15.2 0Q16.2 0 16.2 1L16.2 9.8Q16.2 10.8 15.2 10.8L5 10.8L2.6 13.8L2.6 10.8L1 10.8Q0 10.8 0 9.8L0 1Q0 0 1 0Z" fill="#fff" stroke="#4b8799" stroke-width="1.5"/><rect x="7.3" y="1.8" width="2" height="2" fill="#4b8799"/><path d="M6.6 4.8h2.7v3.4h1v1.2h-4.4v-1.2h1v-2.2h-.3z" fill="#4b8799"/></g><g transform="translate(258.2 202.6) scale(1)"><path d="M0 9L3.6 5.4L7.2 9L3.6 12.6Z" fill="#fff" stroke="#4b8799" stroke-width="1.2"/><path d="M5.5 3.2L11 9L5.5 14.8" fill="none" stroke="#4b8799" stroke-width="3.4"/><path d="M5.5 3.2L11 9L5.5 14.8" fill="none" stroke="#fff" stroke-width="1.4"/><path d="M9.5 0.5L17 9L9.5 17.5" fill="none" stroke="#4b8799" stroke-width="3.8"/><path d="M9.5 0.5L17 9L9.5 17.5" fill="none" stroke="#fff" stroke-width="1.6"/></g><g transform="translate(295.6 203.4) scale(1)"><path d="M5.5 0v2.2M0.6 2.6l1.6 1.6M10.6 2.4l-1.6 1.6M-1 7.2h2.2M1 11.6l1.4-1.3" stroke="#4b8799" stroke-width="1.3"/><circle cx="5.8" cy="6.8" r="3.6" fill="#fff" stroke="#4b8799" stroke-width="1.4"/><path d="M5.2 15.2Q2.6 15.2 2.6 12.8Q2.6 10.6 5 10.4Q5.8 7.2 9.6 7.2Q12.6 7.2 13.8 9.8Q17.2 9.6 18.2 12.2Q18.8 15.2 15.6 15.2Z" fill="#fff" stroke="#4b8799" stroke-width="1.5"/></g></svg><svg style="left:13px;top:277px" width="60" height="424" viewBox="13 277 60 424"><ellipse cx="37" cy="325.8" rx="13" ry="2.2" fill="#000" opacity=".18"/><g transform="translate(36.5 308.3)"><circle r="17.6" fill="url(#mg)" stroke="#8d9dbd" stroke-width="1.5"/><use href="#turnR"/></g><circle cx="25.2" cy="297.1" r="7" fill="url(#bk)"/><ellipse cx="37" cy="444.3" rx="13" ry="2.2" fill="#000" opacity=".18"/><g transform="translate(36.5 426.8)"><circle r="17.6" fill="url(#mg)" stroke="#8d9dbd" stroke-width="1.5"/><use href="#works"/></g><circle cx="25.2" cy="415.6" r="7" fill="url(#bk)"/><ellipse cx="37" cy="563.1" rx="13" ry="2.2" fill="#000" opacity=".18"/><g transform="translate(36.5 545.6)"><circle r="17.6" fill="url(#mg)" stroke="#8d9dbd" stroke-width="1.5"/><use href="#works"/></g><circle cx="25.2" cy="534.4" r="7" fill="url(#bk)"/><ellipse cx="37" cy="682.0" rx="13" ry="2.2" fill="#000" opacity=".18"/><g transform="translate(36.5 664.5)"><circle r="17.6" fill="url(#mg)" stroke="#8d9dbd" stroke-width="1.5"/><use href="#works"/></g><circle cx="25.2" cy="653.3" r="7" fill="url(#bk)"/></svg><svg style="left:365px;top:779px" width="1534" height="70" viewBox="365 779 1534 70"><rect x="416" y="787" width="8.7" height="23" rx="1.5" fill="#44606a"/><circle cx="420.3" cy="791.4" r="2.9" fill="#4fdcb4"/><circle cx="420.3" cy="798.9" r="2.8" fill="#f0d070"/><circle cx="420.3" cy="806" r="2.7" fill="#d2502c"/><circle cx="419.7" cy="834.8" r="7.8" fill="#f3e4e4" stroke="#dc1a21" stroke-width="3.3"/><path d="M413.9 840.6L425.5 829" stroke="#dc1a21" stroke-width="3.2"/><g transform="translate(1198.5 787.5) scale(0.95)"><path d="M1 0L15.2 0Q16.2 0 16.2 1L16.2 9.8Q16.2 10.8 15.2 10.8L5 10.8L2.6 13.8L2.6 10.8L1 10.8Q0 10.8 0 9.8L0 1Q0 0 1 0Z" fill="#fff" stroke="#fff" stroke-width="1.5"/><rect x="7.3" y="1.8" width="2" height="2" fill="#444"/><path d="M6.6 4.8h2.7v3.4h1v1.2h-4.4v-1.2h1v-2.2h-.3z" fill="#444"/></g><g transform="translate(1338 788.5) scale(0.95)"><rect x="0" y="0" width="11" height="8" rx="1" fill="#fff" stroke="#fff" stroke-width="1.5"/><path d="M11.5 2.2L16 0.2L16 7.8L11.5 5.8Z" fill="#444" stroke="#fff" stroke-width=".8"/><path d="M4.5 8.5L7.5 12L10 14.2" stroke="#fff" stroke-width="1.7" fill="none"/><path d="M6.5 10.5L10.5 13.6" stroke="#fff" stroke-width=".7"/></g><g transform="translate(1448.5 788) scale(0.95)"><rect x="0" y="0" width="17.6" height="10" rx="1.3" fill="#f2f2f2" stroke="#fff" stroke-width="1.5"/><rect x="2.2" y="2.2" width="4.6" height="5.6" fill="#777"/><path d="M8.4 3h6.6M8.4 5h6.6M8.4 7h6.6" stroke="#777" stroke-width="1"/><path d="M4 10.5v5.5M13.6 10.5v5.5" stroke="#fff" stroke-width="1.6"/></g><g transform="translate(1556 786.5) scale(0.92)"><path d="M0 9L3.6 5.4L7.2 9L3.6 12.6Z" fill="#808080" stroke="#fff" stroke-width="1.2"/><path d="M5.5 3.2L11 9L5.5 14.8" fill="none" stroke="#fff" stroke-width="3.4"/><path d="M5.5 3.2L11 9L5.5 14.8" fill="none" stroke="#808080" stroke-width="1.4"/><path d="M9.5 0.5L17 9L9.5 17.5" fill="none" stroke="#fff" stroke-width="3.8"/><path d="M9.5 0.5L17 9L9.5 17.5" fill="none" stroke="#808080" stroke-width="1.6"/></g><g transform="translate(1665 786.5) scale(0.95)"><path d="M5.5 0v2.2M0.6 2.6l1.6 1.6M10.6 2.4l-1.6 1.6M-1 7.2h2.2M1 11.6l1.4-1.3" stroke="#fff" stroke-width="1.3"/><circle cx="5.8" cy="6.8" r="3.6" fill="#fff" stroke="#fff" stroke-width="1.4"/><path d="M5.2 15.2Q2.6 15.2 2.6 12.8Q2.6 10.6 5 10.4Q5.8 7.2 9.6 7.2Q12.6 7.2 13.8 9.8Q17.2 9.6 18.2 12.2Q18.8 15.2 15.6 15.2Z" fill="#fff" stroke="#555" stroke-width=".6"/></g></svg><svg style="left:1490px;top:180px" width="250" height="24" viewBox="1490 180 250 24"><text x="1496" y="198.5" font-family="Liberation Sans,sans-serif" font-weight="bold" font-size="17" fill="#2f6f8f">?</text><path d="M1506 190.5L1506 200.5L1508.6 198.2L1510.4 202L1512.2 201.2L1510.4 197.6L1513.8 197.4Z" fill="#2f6f8f"/><path d="M1596 184.5L1607 184.5L1608.5 191L1594.5 191Z" fill="#2f6f8f"/><path d="M1597.4 186h8.2M1597 188h9" stroke="#fff" stroke-width=".9"/><path d="M1592 191.5L1611 191.5L1611 198.5L1592 198.5Z" fill="#2f6f8f"/><rect x="1594.5" y="195" width="14" height="2" fill="#cfe0e8"/><rect x="1706.5" y="186" width="15" height="13" fill="#2f6f8f"/><path d="M1709.5 191.5L1713.5 196L1726 183" fill="none" stroke="#fff" stroke-width="4"/><path d="M1709.5 191.5L1713.5 196L1726 183" fill="none" stroke="#2f6f8f" stroke-width="2.2"/></svg><!--/UI-->
<div id="vscroll" style="left:1899px;top:0;width:15px;height:890px;background:#f1f1f1"></div>
<i style="left:1901px;top:20px;width:13px;height:705.5px;background:#c1c1c1"></i>
<svg style="left:1903px;top:8px" width="9" height="5"><path d="M0 5L4.5 0L9 5Z" fill="#a3a3a3"/></svg>
<svg style="left:1903px;top:883px" width="9" height="5"><path d="M0 0L4.5 5L9 0Z" fill="#505050"/></svg>
</div>
</body></html>
